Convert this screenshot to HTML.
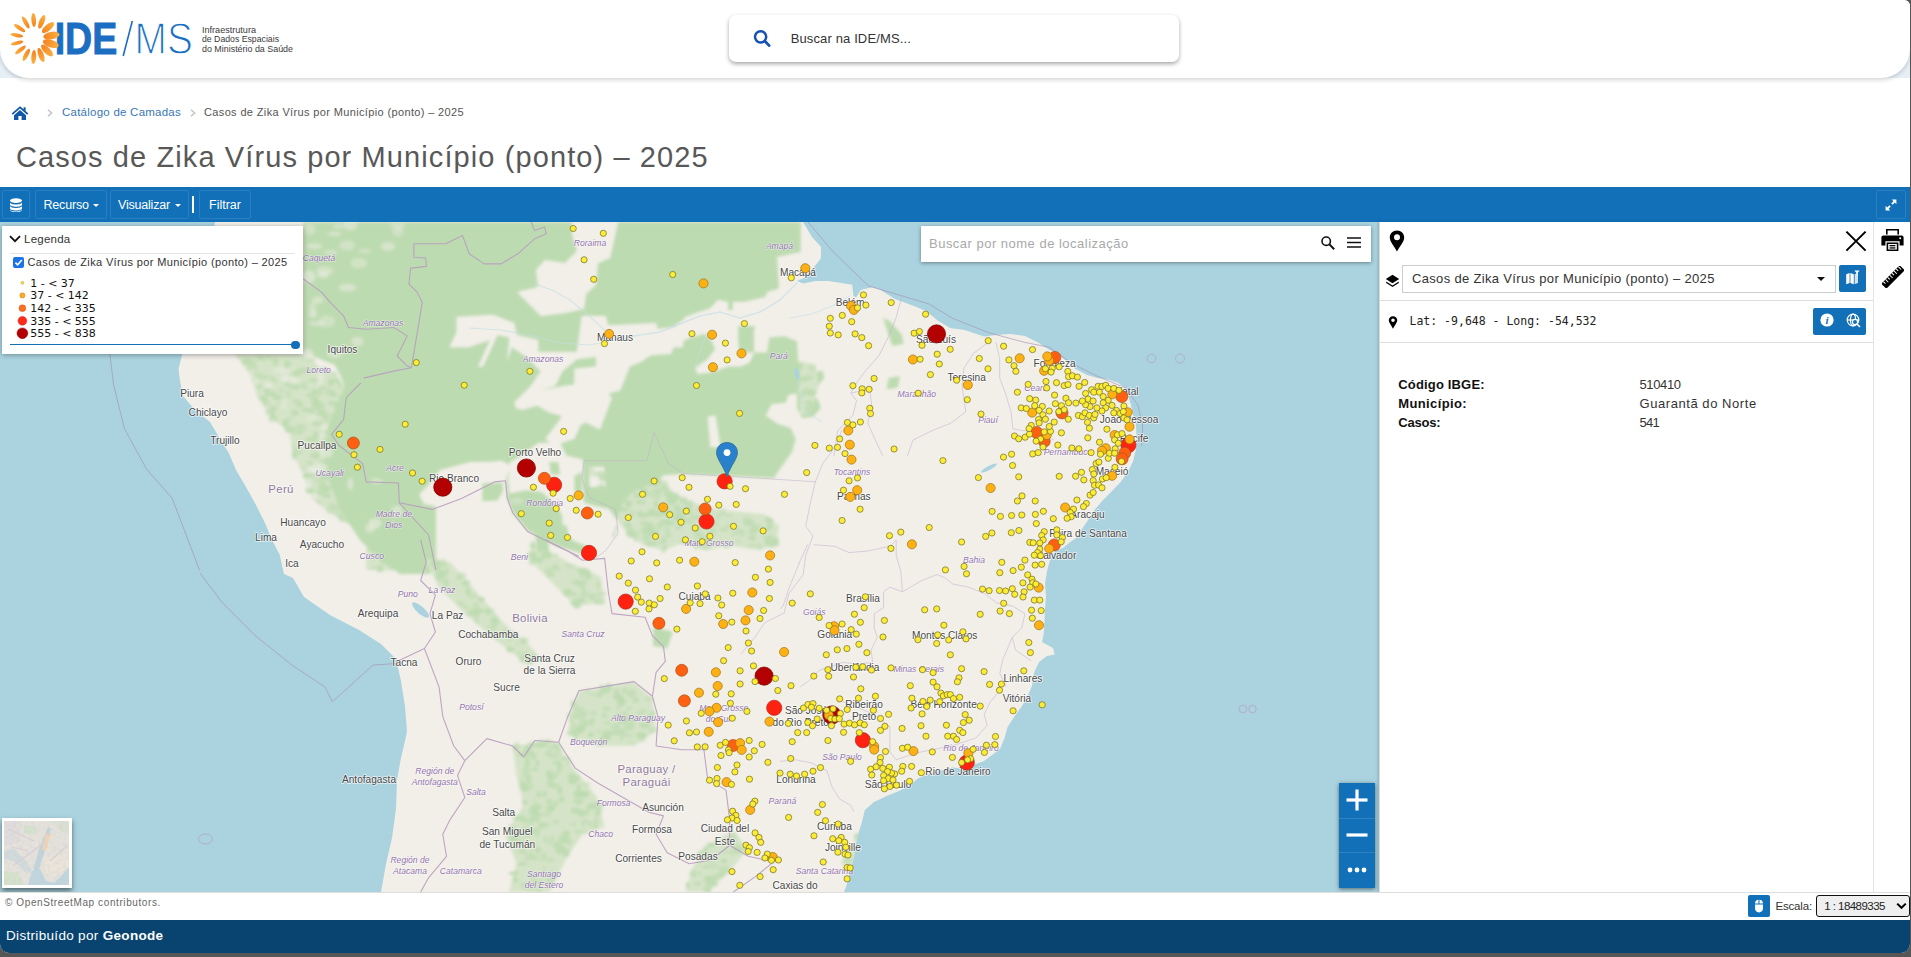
<!DOCTYPE html>
<html lang="pt-br">
<head>
<meta charset="utf-8">
<title>Casos de Zika Vírus por Município (ponto) – 2025</title>
<style>
*{box-sizing:border-box;margin:0;padding:0}
html,body{width:1911px;height:957px;overflow:hidden;background:#565656;font-family:"Liberation Sans",sans-serif;color:#333}
#app{position:absolute;left:0;top:0;width:1910px;height:953px;background:#fff;overflow:hidden;border-radius:0 6px 9px 9px}
.abs{position:absolute}
.t{position:absolute;white-space:nowrap;line-height:1}
/* header */
#hdrbg{position:absolute;left:0;top:46px;width:1910px;height:32px;background:linear-gradient(90deg,#e6eef6 0,#e6eef6 32px,#fff 32px,#fff 1878px,#e6eef6 1878px)}
#hdr{position:absolute;left:0;top:0;width:1910px;height:78px;background:#fff;border-radius:0 0 29px 29px;box-shadow:0 2px 4px rgba(0,0,0,.16)}
#below{position:absolute;left:0;top:78px;width:1910px;height:109px;background:#fff}
#search{position:absolute;left:729px;top:15px;width:450px;height:47px;background:#fff;border-radius:7px;box-shadow:0 2px 4px rgba(0,0,0,.35)}
/* toolbar */
#tb{position:absolute;left:0;top:187px;width:1910px;height:35px;background:#1170b8}
.tbb{position:absolute;top:3px;height:29px;border:1px solid #2a7fc0;border-radius:2px;color:#fff;font-size:12px}
/* map */
#map{position:absolute;left:0;top:222px;width:1379px;height:670px;background:#aad3df;overflow:hidden}
#panel{position:absolute;left:1379px;top:222px;width:494px;height:670px;background:#fff;border-left:1px solid #ddd;box-shadow:-1px 0 3px rgba(0,0,0,.18)}
#rtools{position:absolute;left:1873px;top:222px;width:36px;height:670px;background:#fff;border-left:1px solid #e4e4e4}
#bbar{position:absolute;left:0;top:892px;width:1910px;height:28px;background:#fff;border-top:1px solid #ddd}
#foot{position:absolute;left:0;top:920px;width:1910px;height:33px;background:#08446f}
</style>
</head>
<body>
<div id="app">
<div id="hdrbg"></div>
<div id="below"></div>
<div id="hdr"></div>
<!-- logo -->
<svg class="abs" style="left:0;top:0" width="320" height="78" viewBox="0 0 320 78">
  <text x="54.7" y="53.7" font-family="Liberation Sans, sans-serif" font-weight="bold" font-size="44.5" fill="#1b6ec2" stroke="#1b6ec2" stroke-width=".9" textLength="62.6" lengthAdjust="spacingAndGlyphs">IDE</text>
  <line x1="123.2" y1="56" x2="132.3" y2="21" stroke="#1b6ec2" stroke-width="1.6"/>
  <text x="134.6" y="53.7" font-family="Liberation Sans, sans-serif" font-size="44.5" fill="#1b6ec2" stroke="#fff" stroke-width="1.3" textLength="58.2" lengthAdjust="spacingAndGlyphs">MS</text>
  <g font-family="Liberation Sans, sans-serif" font-size="8.8" fill="#3a3a3a">
    <text x="202" y="33" textLength="54" lengthAdjust="spacingAndGlyphs">Infraestrutura</text>
    <text x="202" y="42.4" textLength="77" lengthAdjust="spacingAndGlyphs">de Dados Espaciais</text>
    <text x="202" y="51.8" textLength="91" lengthAdjust="spacingAndGlyphs">do Ministério da Saúde</text>
  </g>
  <g id="sun" transform="translate(35,38.5)">
    <defs><linearGradient id="pg" x1="0" y1="0" x2="0" y2="1"><stop offset="0" stop-color="#fbb040"/><stop offset="1" stop-color="#f58220"/></linearGradient></defs>
    <g fill="url(#pg)">
      <ellipse cx="0" cy="-18.5" rx="2.3" ry="7" transform="rotate(-4)"/>
      <ellipse cx="0" cy="-18" rx="2.6" ry="7.2" transform="rotate(22)"/>
      <ellipse cx="0" cy="-17" rx="3.1" ry="7.6" transform="rotate(50)"/>
      <ellipse cx="0" cy="-16.6" rx="3.8" ry="8.2" transform="rotate(80)"/>
      <ellipse cx="0" cy="-16.6" rx="3.8" ry="8.2" transform="rotate(108)"/>
      <ellipse cx="0" cy="-17" rx="3.2" ry="7.8" transform="rotate(135)"/>
      <ellipse cx="0" cy="-17.6" rx="2.7" ry="7.4" transform="rotate(160)"/>
      <ellipse cx="0" cy="-18.5" rx="2.4" ry="7" transform="rotate(184)"/>
      <ellipse cx="0" cy="-18.5" rx="2.2" ry="6.8" transform="rotate(208)"/>
      <ellipse cx="0" cy="-18.5" rx="2" ry="6.6" transform="rotate(232)"/>
      <ellipse cx="0" cy="-18.5" rx="1.9" ry="6.4" transform="rotate(256)"/>
      <ellipse cx="0" cy="-18.5" rx="1.9" ry="6.4" transform="rotate(280)"/>
      <ellipse cx="0" cy="-18.5" rx="2" ry="6.6" transform="rotate(304)"/>
      <ellipse cx="0" cy="-18.5" rx="2.1" ry="6.8" transform="rotate(330)"/>
    </g>
  </g>
</svg>
<!-- search -->
<div id="search"></div>
<svg class="abs" style="left:752px;top:28px" width="20" height="20" viewBox="0 0 20 20"><circle cx="8.6" cy="8.8" r="5.6" fill="none" stroke="#1351b4" stroke-width="2.5"/><line x1="12.8" y1="13" x2="17.2" y2="17.6" stroke="#1351b4" stroke-width="2.8" stroke-linecap="round"/></svg>
<div class="t" id="srchtxt" style="left:790.7px;top:31.5px;font-size:13px;color:#333;letter-spacing:.13px">Buscar na IDE/MS...</div>
<!-- breadcrumb -->
<svg class="abs" style="left:11px;top:105px" width="18" height="16" viewBox="0 0 18 16"><path d="M9 1.2 L0.6 8.4 L1.8 9.8 L9 3.6 L16.2 9.8 L17.4 8.4 L14.6 6 V2.2 H12.6 V4.3 Z" fill="#1258a8"/><path d="M9 5 L3 10.2 V15 H7.4 V11 H10.6 V15 H15 V10.2 Z" fill="#1258a8"/></svg>
<svg class="abs" style="left:47px;top:109px" width="6" height="8" viewBox="0 0 6 8"><path d="M1 0.8 L4.6 4 L1 7.2" fill="none" stroke="#c4c4c4" stroke-width="1.5"/></svg>
<div class="t" id="bc1" style="left:62px;top:107px;font-size:11.5px;color:#3a78b5;letter-spacing:.24px">Catálogo de Camadas</div>
<svg class="abs" style="left:189.5px;top:109px" width="6" height="8" viewBox="0 0 6 8"><path d="M1 0.8 L4.6 4 L1 7.2" fill="none" stroke="#c4c4c4" stroke-width="1.5"/></svg>
<div class="t" id="bc2" style="left:204px;top:106.5px;font-size:11px;color:#555;letter-spacing:.36px">Casos de Zika Vírus por Município (ponto) – 2025</div>
<!-- title -->
<div class="t" id="title" style="left:16px;top:143px;font-size:29px;color:#585858;letter-spacing:1.1px">Casos de Zika Vírus por Município (ponto) – 2025</div>
<!-- toolbar -->
<div id="tb">
  <div class="tbb" style="left:2px;width:28px"></div>
  <div class="tbb" style="left:35px;width:72px"></div>
  <div class="tbb" style="left:110px;width:79px"></div>
  <div class="abs" style="left:192px;top:9px;width:1.5px;height:17px;background:#fff"></div>
  <div class="tbb" style="left:199px;width:52px"></div>
  <div class="tbb" style="left:1876px;width:30px"></div>
  <svg class="abs" style="left:9px;top:11px" width="14" height="14" viewBox="0 0 14 14"><g fill="#fff"><ellipse cx="7" cy="2.6" rx="6" ry="2.4"/><path d="M1 4.2 C1 7.2 13 7.2 13 4.2 V6.6 C13 9.6 1 9.6 1 6.6 Z"/><path d="M1 7.8 C1 10.8 13 10.8 13 7.8 V10.2 C13 13.2 1 13.2 1 10.2 Z"/><path d="M1 11.3 C1 14.2 13 14.2 13 11.3 V12 C13 14.8 1 14.8 1 12 Z"/></g></svg>
  <div class="t" id="tb1" style="left:43.5px;top:11.5px;font-size:12.5px;color:#fff;letter-spacing:-.19px">Recurso</div>
  <div class="abs" style="left:93px;top:17px;border-left:3px solid transparent;border-right:3px solid transparent;border-top:3.5px solid #fff"></div>
  <div class="t" id="tb2" style="left:118px;top:11.5px;font-size:12.5px;color:#fff;letter-spacing:-.2px">Visualizar</div>
  <div class="abs" style="left:175px;top:17px;border-left:3px solid transparent;border-right:3px solid transparent;border-top:3.5px solid #fff"></div>
  <div class="t" id="tb3" style="left:209px;top:11.5px;font-size:12.5px;color:#fff">Filtrar</div>
  <svg class="abs" style="left:1885px;top:12px" width="12" height="12" viewBox="0 0 12 12"><g fill="#fff"><path d="M6.8 0.6 H11.4 V5.2 L9.8 3.6 L7.6 5.8 L6.2 4.4 L8.4 2.2 Z"/><path d="M5.2 11.4 H0.6 V6.8 L2.2 8.4 L4.4 6.2 L5.8 7.6 L3.6 9.8 Z"/></g></svg>
</div>
<div id="map">
<svg class="abs" style="left:0;top:0" width="1379" height="670" viewBox="0 0 1379 670">
<polygon points="215.0,0.0 212.0,18.0 198.0,78.0 186.0,118.0 182.0,133.0 178.5,147.0 180.0,159.0 183.0,174.0 195.0,188.0 210.0,200.0 219.0,215.0 229.0,231.5 236.0,248.0 246.0,265.0 255.5,282.0 265.0,301.0 272.0,318.0 279.6,332.6 284.0,352.0 293.0,356.0 304.0,375.0 330.0,393.0 359.0,408.0 381.0,422.0 396.0,437.0 401.0,459.0 405.0,484.0 407.0,510.0 401.0,536.0 397.0,558.0 396.0,587.0 392.0,616.0 386.0,642.0 381.0,670.0 844.0,670.0 846.7,663.0 849.0,653.0 852.0,642.0 854.5,632.0 856.0,621.0 858.5,611.0 862.0,600.0 864.8,588.0 874.0,580.0 886.7,574.0 899.0,569.0 910.0,563.0 918.0,556.6 929.0,552.0 940.0,548.8 952.7,545.6 965.0,547.0 974.7,542.5 984.0,539.0 990.0,534.6 1000.0,527.0 1004.5,516.0 1007.6,505.0 1014.0,495.0 1022.0,484.0 1028.0,473.0 1032.0,464.0 1034.0,451.0 1039.0,440.0 1047.0,434.0 1054.7,432.6 1053.0,426.0 1042.0,420.0 1043.7,412.0 1044.5,399.6 1045.0,387.0 1046.0,374.5 1045.0,362.0 1047.0,349.0 1050.0,338.0 1055.0,329.0 1063.0,326.0 1069.0,321.0 1076.0,316.0 1082.0,307.0 1088.0,298.0 1094.5,288.0 1103.0,278.0 1113.0,268.0 1121.0,259.5 1128.0,249.4 1133.0,239.4 1136.0,227.0 1136.5,213.5 1136.0,203.0 1133.0,193.0 1131.0,183.0 1128.0,173.0 1124.5,165.8 1118.0,160.7 1108.0,157.6 1098.0,156.0 1087.0,153.0 1075.5,147.0 1068.0,140.6 1059.0,133.0 1048.0,127.0 1038.0,120.5 1025.0,114.0 1010.0,112.0 996.0,113.0 984.0,114.4 964.6,108.0 950.0,106.0 938.0,98.7 926.0,89.0 914.0,84.0 895.0,77.0 880.0,67.8 872.3,65.3 861.0,67.8 856.0,75.4 853.5,74.0 852.2,62.8 828.4,59.0 815.8,59.0 803.3,61.5 797.0,59.0 805.8,55.3 815.8,42.7 820.8,36.4 821.0,25.0 812.0,15.0 803.0,0.0" fill="#f2efe9"/>
<defs><filter id="sb" x="-5%" y="-5%" width="110%" height="110%"><feGaussianBlur stdDeviation="1.6"/></filter><clipPath id="lc"><polygon points="215.0,0.0 212.0,18.0 198.0,78.0 186.0,118.0 182.0,133.0 178.5,147.0 180.0,159.0 183.0,174.0 195.0,188.0 210.0,200.0 219.0,215.0 229.0,231.5 236.0,248.0 246.0,265.0 255.5,282.0 265.0,301.0 272.0,318.0 279.6,332.6 284.0,352.0 293.0,356.0 304.0,375.0 330.0,393.0 359.0,408.0 381.0,422.0 396.0,437.0 401.0,459.0 405.0,484.0 407.0,510.0 401.0,536.0 397.0,558.0 396.0,587.0 392.0,616.0 386.0,642.0 381.0,670.0 844.0,670.0 846.7,663.0 849.0,653.0 852.0,642.0 854.5,632.0 856.0,621.0 858.5,611.0 862.0,600.0 864.8,588.0 874.0,580.0 886.7,574.0 899.0,569.0 910.0,563.0 918.0,556.6 929.0,552.0 940.0,548.8 952.7,545.6 965.0,547.0 974.7,542.5 984.0,539.0 990.0,534.6 1000.0,527.0 1004.5,516.0 1007.6,505.0 1014.0,495.0 1022.0,484.0 1028.0,473.0 1032.0,464.0 1034.0,451.0 1039.0,440.0 1047.0,434.0 1054.7,432.6 1053.0,426.0 1042.0,420.0 1043.7,412.0 1044.5,399.6 1045.0,387.0 1046.0,374.5 1045.0,362.0 1047.0,349.0 1050.0,338.0 1055.0,329.0 1063.0,326.0 1069.0,321.0 1076.0,316.0 1082.0,307.0 1088.0,298.0 1094.5,288.0 1103.0,278.0 1113.0,268.0 1121.0,259.5 1128.0,249.4 1133.0,239.4 1136.0,227.0 1136.5,213.5 1136.0,203.0 1133.0,193.0 1131.0,183.0 1128.0,173.0 1124.5,165.8 1118.0,160.7 1108.0,157.6 1098.0,156.0 1087.0,153.0 1075.5,147.0 1068.0,140.6 1059.0,133.0 1048.0,127.0 1038.0,120.5 1025.0,114.0 1010.0,112.0 996.0,113.0 984.0,114.4 964.6,108.0 950.0,106.0 938.0,98.7 926.0,89.0 914.0,84.0 895.0,77.0 880.0,67.8 872.3,65.3 861.0,67.8 856.0,75.4 853.5,74.0 852.2,62.8 828.4,59.0 815.8,59.0 803.3,61.5 797.0,59.0 805.8,55.3 815.8,42.7 820.8,36.4 821.0,25.0 812.0,15.0 803.0,0.0"/></clipPath></defs>
<g clip-path="url(#lc)"><g filter="url(#sb)">
<polygon points="234.4,132.1 307.7,132.1 318.7,144.5 337.0,151.8 344.3,170.2 340.7,192.1 329.7,210.5 337.0,232.4 351.6,250.7 366.3,261.7 366.3,348.2 402.9,348.2 384.6,331.3 366.3,316.7 348.0,302.0 329.7,291.0 311.4,276.4 304.0,254.4 293.0,232.4 289.4,210.5 271.1,195.8 256.4,173.8 249.1,151.8" fill="#d5e4c8"/>
<polygon points="303.0,0.0 800.7,0.0 800.7,30.0 777.0,35.0 779.0,66.6 767.0,70.0 765.6,75.0 760.0,93.0 754.0,108.0 754.0,130.6 767.0,130.6 769.4,115.5 784.4,114.3 797.0,119.3 798.2,139.4 805.8,144.4 802.0,155.7 798.2,170.8 788.2,173.3 785.7,180.8 771.9,182.0 765.6,193.4 778.0,202.0 790.7,206.0 795.7,217.0 792.0,230.0 777.0,251.0 774.4,256.0 683.0,252.0 650.0,254.0 625.0,256.0 620.0,268.0 613.0,280.0 615.5,314.0 600.0,318.0 590.0,334.0 557.0,324.0 528.0,309.0 513.0,291.0 507.0,276.0 505.0,240.0 470.0,240.0 440.0,248.0 425.0,268.0 436.0,286.0 436.0,338.0 430.0,352.0 400.0,352.0 380.0,338.0 360.0,318.0 340.0,288.0 325.0,248.0 322.0,218.0 335.0,188.0 345.0,163.0 335.0,143.0 303.0,130.0" fill="#bddbb0"/>
<polygon points="618.0,241.7 649.3,241.7 658.9,253.7 673.3,270.6 692.6,280.2 716.7,287.4 740.7,289.8 764.8,292.3 779.2,304.3 776.8,321.1 760.0,328.4 728.7,323.6 704.6,328.4 683.0,321.1 663.7,328.4 644.4,323.6 630.0,313.9 618.0,299.5 613.1,280.2 601.1,268.2 591.5,256.1 586.7,241.7" fill="#d5e4c8"/>
<polygon points="797.0,173.3 809.5,170.8 818.3,178.3 820.8,185.9 813.3,194.7 802.0,195.9 797.0,185.9" fill="#bddbb0"/>
<polygon points="812.1,152.0 822.1,148.2 824.6,155.7 818.3,163.3 812.1,160.7" fill="#bddbb0"/>
<polygon points="424.4,336.4 450.1,340.1 479.6,373.2 505.3,402.6 531.1,424.7 542.1,439.4 523.7,439.4 494.3,417.3 464.8,391.6 439.1,365.8" fill="#d5e4c8"/>
<polygon points="531.1,318.0 567.8,340.1 600.9,354.8 604.6,380.5 575.2,384.2 553.1,362.1 531.1,340.1" fill="#d5e4c8"/>
<polygon points="653.2,404.4 672.7,410.0 667.2,426.5 653.2,423.9" fill="#bddbb0"/>
<polygon points="578.9,468.8 634.0,459.6 652.4,476.2 656.1,509.3 634.0,524.0 597.3,524.0 567.8,513.0 571.5,487.2" fill="#d5e4c8"/>
<polygon points="512.7,524.0 553.1,518.5 567.8,538.7 597.3,575.5 604.6,604.9 582.5,612.3 567.8,634.3 549.4,670.0 509.0,670.0 516.3,641.7 505.3,612.3 523.7,582.8 516.3,553.4" fill="#d5e4c8"/>
<polygon points="707.6,623.3 733.4,608.6 748.1,627.0 729.7,649.1 707.6,670.0 685.5,670.0 692.9,645.4" fill="#d5e4c8"/>
<polygon points="876.8,586.5 898.9,571.8 909.9,575.5 862.1,623.3 851.1,645.4 840.0,641.7 858.4,612.3" fill="#d5e4c8"/>
<polygon points="882.9,95.7 890.4,99.4 901.7,112.6 903.6,122.1 892.3,123.9 888.5,112.6" fill="#bddbb0"/>
<polygon points="888.5,156.0 899.8,154.1 898.0,165.4 886.7,167.3" fill="#bddbb0"/>
<polygon points="800.0,139.0 815.1,142.8 818.8,163.5 811.3,189.9 800.0,193.6" fill="#d5e4c8"/>
<polygon points="584.5,239.2 649.6,239.2 651.2,227.4 666.9,238.4 700.0,249.4 682.6,251.8 666.9,250.2 657.5,258.8 644.9,265.1 632.3,269.8 622.9,280.8 618.2,293.4 617.4,305.9 610.4,318.5 604.1,312.2 608.8,296.5 604.1,287.1 584.5,283.9" fill="#bddbb0"/>
<polygon points="572.0,0.0 618.0,0.0 615.0,14.0 610.0,36.0 598.0,41.0 596.0,63.0 586.0,72.0 584.0,87.0 565.0,91.0 541.0,94.0 531.0,84.0 517.0,70.0 538.0,65.0 536.0,48.0 545.0,38.0 565.0,41.0 577.0,29.0 572.0,12.0" fill="#f2efe9"/>
<polygon points="456.5,95.1 492.6,92.7 514.3,101.1 516.7,113.1 538.3,118.0 538.3,130.0 576.8,130.0 579.2,113.1 581.7,93.9 605.7,93.9 608.1,103.5 656.3,101.1 658.7,115.6 685.2,96.3 682.8,125.2 661.1,125.2 641.8,139.6 629.8,144.4 620.2,168.5 600.9,173.3 598.5,192.6 584.1,195.0 574.4,216.7 552.8,224.1 545.5,216.7 560.0,197.4 564.8,185.4 574.4,178.1 574.4,146.8 596.1,144.4 596.1,134.8 576.8,137.2 562.4,149.3 555.2,163.7 540.7,168.5 516.7,187.8 514.3,180.5 531.1,163.7 540.7,149.3 526.3,134.8 511.8,125.2 507.0,139.6 509.4,115.6 497.4,113.1 483.0,144.4 478.1,144.4 490.2,118.0 468.5,125.2 449.3,125.2 456.5,110.7" fill="#f2efe9"/>
<polygon points="608.0,103.5 640.0,104.0 655.0,103.0 656.0,107.0 684.0,104.0 685.0,95.0 699.0,90.0 710.0,86.6 718.0,78.0 728.0,80.0 728.0,88.0 733.0,88.0 733.0,80.0 744.0,80.0 765.6,75.0 775.0,78.0 775.0,108.0 754.0,104.0 738.0,104.0 738.0,115.5 710.0,117.0 705.0,111.8 690.0,115.5 674.0,124.0 671.0,132.0 652.6,133.0 640.0,137.0 625.0,130.0 608.0,128.0" fill="#f2efe9"/>
<polygon points="710.3,116.8 738.0,115.5 738.0,108.0 710.3,108.0 707.8,108.0" fill="#f2efe9"/>
<polygon points="710.3,116.8 738.0,115.5 739.2,130.6 754.3,130.6 749.3,140.7 740.5,144.4 727.9,144.4 717.9,148.2 707.8,150.7 697.8,152.0 695.3,145.7 707.8,136.9 715.4,126.8" fill="#f2efe9"/>
<polygon points="707.8,194.7 715.4,193.4 720.4,225.0 710.3,225.0" fill="#f2efe9"/>
<polygon points="419.2,272.4 428.9,262.8 443.3,253.2 460.2,246.0 481.8,241.1 501.1,238.7 510.7,243.6 505.9,258.0 496.3,262.8 477.0,272.4 460.2,282.1 438.5,284.5 424.1,282.1" fill="#f2efe9"/>
<polygon points="517.9,178.6 537.2,168.9 563.7,164.1 600.0,159.3 611.8,176.1 600.0,207.4 585.4,200.2 573.3,207.4 568.5,195.4 549.2,190.6 537.2,183.4 520.4,188.2" fill="#f2efe9"/>
<polygon points="509.9,240.0 519.3,235.3 538.1,221.1 560.1,221.1 566.4,233.7 582.9,237.6 583.7,280.8 594.7,283.9 608.8,287.1 618.2,299.6 610.4,318.5 600.9,334.2 588.4,324.8 572.7,318.5 563.3,305.9 561.7,291.8 550.7,277.7 541.3,269.8 525.6,268.2 509.9,271.4 508.3,258.8" fill="#f2efe9"/>
<polygon points="588.4,245.5 604.1,244.7 605.7,265.1 590.0,265.1" fill="#f2efe9"/>
<g fill="#bddbb0"><ellipse cx="310.7" cy="253.0" rx="5.2" ry="2.7" opacity="0.70"/><ellipse cx="333.4" cy="172.0" rx="3.7" ry="3.1" opacity="0.85"/><ellipse cx="344.6" cy="265.1" rx="2.4" ry="1.5" opacity="0.71"/><ellipse cx="275.2" cy="138.6" rx="3.5" ry="2.6" opacity="0.87"/><ellipse cx="321.9" cy="270.4" rx="3.6" ry="3.2" opacity="0.68"/><ellipse cx="273.1" cy="194.5" rx="2.1" ry="3.4" opacity="0.65"/><ellipse cx="251.5" cy="145.0" rx="4.7" ry="1.9" opacity="0.73"/><ellipse cx="309.8" cy="173.3" rx="4.5" ry="1.8" opacity="0.77"/><ellipse cx="270.3" cy="190.4" rx="5.4" ry="3.5" opacity="0.60"/><ellipse cx="289.9" cy="196.1" rx="2.1" ry="1.7" opacity="0.74"/><ellipse cx="297.1" cy="230.0" rx="5.3" ry="2.7" opacity="0.74"/><ellipse cx="251.9" cy="140.4" rx="5.4" ry="2.1" opacity="0.80"/><ellipse cx="334.9" cy="195.5" rx="2.4" ry="3.3" opacity="0.48"/><ellipse cx="268.8" cy="135.6" rx="2.8" ry="2.6" opacity="0.48"/><ellipse cx="330.8" cy="160.5" rx="3.1" ry="3.7" opacity="0.94"/><ellipse cx="345.1" cy="281.5" rx="4.0" ry="1.9" opacity="0.47"/><ellipse cx="358.6" cy="284.1" rx="4.7" ry="3.8" opacity="0.63"/><ellipse cx="367.6" cy="318.7" rx="3.9" ry="3.1" opacity="0.64"/><ellipse cx="332.6" cy="263.7" rx="2.1" ry="3.1" opacity="0.95"/><ellipse cx="332.3" cy="227.3" rx="4.9" ry="1.7" opacity="0.83"/><ellipse cx="315.5" cy="181.8" rx="4.4" ry="2.7" opacity="0.76"/><ellipse cx="287.8" cy="161.5" rx="3.6" ry="3.6" opacity="0.87"/><ellipse cx="281.1" cy="168.6" rx="3.5" ry="2.2" opacity="0.56"/><ellipse cx="317.6" cy="200.2" rx="4.9" ry="4.0" opacity="0.68"/><ellipse cx="247.0" cy="138.9" rx="5.0" ry="1.6" opacity="0.80"/><ellipse cx="330.6" cy="198.9" rx="4.7" ry="1.5" opacity="0.52"/><ellipse cx="311.1" cy="137.4" rx="4.9" ry="2.1" opacity="0.52"/><ellipse cx="309.7" cy="268.2" rx="4.2" ry="3.5" opacity="0.93"/><ellipse cx="314.5" cy="170.7" rx="1.8" ry="2.7" opacity="0.81"/><ellipse cx="322.1" cy="264.9" rx="4.6" ry="2.5" opacity="0.85"/><ellipse cx="342.5" cy="287.2" rx="2.6" ry="3.7" opacity="0.94"/><ellipse cx="293.2" cy="150.0" rx="3.4" ry="2.9" opacity="0.83"/><ellipse cx="258.1" cy="164.2" rx="3.7" ry="3.3" opacity="0.87"/><ellipse cx="323.2" cy="194.8" rx="4.5" ry="3.1" opacity="0.71"/><ellipse cx="376.9" cy="326.7" rx="2.6" ry="3.6" opacity="0.93"/><ellipse cx="322.8" cy="255.9" rx="2.5" ry="2.8" opacity="0.70"/><ellipse cx="329.3" cy="238.2" rx="4.4" ry="1.7" opacity="0.72"/><ellipse cx="314.2" cy="159.5" rx="3.4" ry="3.5" opacity="0.90"/><ellipse cx="314.7" cy="200.6" rx="2.5" ry="3.0" opacity="0.91"/><ellipse cx="288.7" cy="208.9" rx="4.1" ry="1.8" opacity="0.82"/><ellipse cx="276.7" cy="174.8" rx="3.8" ry="2.6" opacity="0.64"/><ellipse cx="304.1" cy="246.5" rx="2.4" ry="2.0" opacity="0.77"/><ellipse cx="342.0" cy="246.5" rx="4.9" ry="3.0" opacity="0.88"/><ellipse cx="371.0" cy="327.2" rx="3.0" ry="2.3" opacity="0.91"/><ellipse cx="278.2" cy="153.0" rx="4.9" ry="2.6" opacity="0.84"/><ellipse cx="388.0" cy="341.3" rx="2.2" ry="2.8" opacity="0.83"/><ellipse cx="319.2" cy="280.3" rx="2.5" ry="1.7" opacity="0.50"/><ellipse cx="321.2" cy="255.0" rx="2.3" ry="2.0" opacity="0.55"/><ellipse cx="376.0" cy="346.1" rx="5.2" ry="1.7" opacity="0.48"/><ellipse cx="313.1" cy="243.4" rx="3.4" ry="3.0" opacity="0.46"/><ellipse cx="267.3" cy="167.7" rx="3.7" ry="1.5" opacity="0.90"/><ellipse cx="365.5" cy="308.1" rx="3.3" ry="3.7" opacity="0.89"/><ellipse cx="351.5" cy="297.9" rx="4.6" ry="2.5" opacity="0.81"/><ellipse cx="339.6" cy="182.2" rx="5.3" ry="3.2" opacity="0.62"/><ellipse cx="345.6" cy="255.2" rx="3.8" ry="2.5" opacity="0.95"/><ellipse cx="342.7" cy="283.6" rx="4.6" ry="4.0" opacity="0.46"/><ellipse cx="338.1" cy="291.7" rx="2.7" ry="2.5" opacity="0.48"/><ellipse cx="313.9" cy="168.6" rx="3.6" ry="3.0" opacity="0.48"/><ellipse cx="323.2" cy="261.3" rx="3.2" ry="2.2" opacity="0.78"/><ellipse cx="328.9" cy="193.3" rx="4.5" ry="2.2" opacity="0.46"/><ellipse cx="275.7" cy="141.3" rx="2.4" ry="3.4" opacity="0.64"/><ellipse cx="311.2" cy="176.1" rx="2.0" ry="2.8" opacity="0.51"/><ellipse cx="311.2" cy="188.7" rx="4.0" ry="2.5" opacity="0.84"/><ellipse cx="274.6" cy="156.7" rx="5.1" ry="3.5" opacity="0.76"/><ellipse cx="295.0" cy="190.7" rx="4.3" ry="2.9" opacity="0.75"/><ellipse cx="341.1" cy="294.9" rx="2.5" ry="2.1" opacity="0.94"/><ellipse cx="325.7" cy="147.7" rx="2.1" ry="3.2" opacity="0.73"/><ellipse cx="315.1" cy="177.6" rx="3.1" ry="3.4" opacity="0.87"/><ellipse cx="305.9" cy="187.8" rx="4.8" ry="2.4" opacity="0.78"/><ellipse cx="296.7" cy="153.0" rx="5.0" ry="1.7" opacity="0.49"/><ellipse cx="329.5" cy="236.9" rx="4.3" ry="2.2" opacity="0.84"/><ellipse cx="285.8" cy="200.7" rx="3.3" ry="3.8" opacity="0.90"/><ellipse cx="296.0" cy="210.6" rx="3.3" ry="2.5" opacity="0.55"/><ellipse cx="329.3" cy="170.2" rx="4.6" ry="3.7" opacity="0.59"/><ellipse cx="326.1" cy="254.7" rx="5.4" ry="3.1" opacity="0.85"/><ellipse cx="341.3" cy="163.2" rx="4.6" ry="3.1" opacity="0.57"/><ellipse cx="300.9" cy="205.1" rx="5.4" ry="3.2" opacity="0.70"/><ellipse cx="384.2" cy="339.1" rx="4.2" ry="2.8" opacity="0.81"/><ellipse cx="305.3" cy="163.7" rx="4.5" ry="4.0" opacity="0.64"/><ellipse cx="262.7" cy="176.2" rx="3.4" ry="2.2" opacity="0.93"/><ellipse cx="265.5" cy="179.0" rx="2.7" ry="3.3" opacity="0.75"/><ellipse cx="272.2" cy="172.0" rx="2.8" ry="1.9" opacity="0.83"/><ellipse cx="315.8" cy="179.8" rx="2.0" ry="3.9" opacity="0.85"/><ellipse cx="321.3" cy="191.4" rx="5.5" ry="3.1" opacity="0.57"/><ellipse cx="354.6" cy="263.0" rx="2.4" ry="1.9" opacity="0.61"/><ellipse cx="321.4" cy="269.7" rx="5.5" ry="2.2" opacity="0.72"/><ellipse cx="315.3" cy="233.4" rx="5.3" ry="3.0" opacity="0.88"/><ellipse cx="323.0" cy="166.1" rx="4.9" ry="2.3" opacity="0.61"/><ellipse cx="329.5" cy="231.1" rx="1.8" ry="4.0" opacity="0.85"/><ellipse cx="325.4" cy="196.5" rx="3.0" ry="2.5" opacity="0.78"/><ellipse cx="277.6" cy="175.3" rx="4.5" ry="2.3" opacity="0.92"/><ellipse cx="329.3" cy="288.5" rx="3.0" ry="3.6" opacity="0.50"/><ellipse cx="258.2" cy="152.5" rx="4.3" ry="3.3" opacity="0.54"/><ellipse cx="334.3" cy="151.5" rx="2.6" ry="1.9" opacity="0.51"/><ellipse cx="303.0" cy="147.8" rx="5.2" ry="2.6" opacity="0.71"/><ellipse cx="343.5" cy="297.8" rx="4.8" ry="2.5" opacity="0.62"/><ellipse cx="303.9" cy="135.4" rx="3.3" ry="3.2" opacity="0.94"/><ellipse cx="290.2" cy="206.0" rx="4.2" ry="1.8" opacity="0.64"/><ellipse cx="340.1" cy="174.8" rx="2.1" ry="2.1" opacity="0.74"/><ellipse cx="312.5" cy="158.9" rx="5.4" ry="1.8" opacity="0.90"/><ellipse cx="326.0" cy="253.2" rx="3.9" ry="2.2" opacity="0.90"/><ellipse cx="335.8" cy="158.6" rx="4.9" ry="2.2" opacity="0.90"/><ellipse cx="326.7" cy="148.5" rx="1.9" ry="2.0" opacity="0.94"/><ellipse cx="313.3" cy="163.0" rx="3.2" ry="2.9" opacity="0.54"/><ellipse cx="322.0" cy="189.0" rx="3.9" ry="2.3" opacity="0.77"/><ellipse cx="335.5" cy="233.6" rx="3.3" ry="3.1" opacity="0.79"/><ellipse cx="362.2" cy="294.5" rx="3.6" ry="4.0" opacity="0.87"/><ellipse cx="307.6" cy="254.4" rx="5.1" ry="2.8" opacity="0.71"/><ellipse cx="288.5" cy="143.9" rx="4.5" ry="3.8" opacity="0.82"/><ellipse cx="309.7" cy="240.7" rx="3.3" ry="1.6" opacity="0.80"/><ellipse cx="323.1" cy="183.7" rx="2.9" ry="2.5" opacity="0.57"/><ellipse cx="284.9" cy="202.3" rx="2.0" ry="3.7" opacity="0.86"/><ellipse cx="301.4" cy="209.1" rx="4.0" ry="1.6" opacity="0.47"/><ellipse cx="294.1" cy="234.2" rx="2.4" ry="3.7" opacity="0.95"/><ellipse cx="309.4" cy="149.1" rx="2.6" ry="2.3" opacity="0.81"/><ellipse cx="267.5" cy="171.2" rx="2.7" ry="3.2" opacity="0.85"/><ellipse cx="273.0" cy="197.1" rx="5.2" ry="3.2" opacity="0.59"/><ellipse cx="323.4" cy="246.8" rx="2.0" ry="3.0" opacity="0.59"/><ellipse cx="318.7" cy="170.9" rx="3.9" ry="3.1" opacity="0.63"/><ellipse cx="321.5" cy="241.3" rx="4.9" ry="3.2" opacity="0.71"/><ellipse cx="336.9" cy="182.9" rx="3.4" ry="3.4" opacity="0.84"/><ellipse cx="316.8" cy="179.9" rx="3.9" ry="2.7" opacity="0.47"/><ellipse cx="335.0" cy="286.5" rx="3.9" ry="3.7" opacity="0.54"/><ellipse cx="260.0" cy="135.9" rx="3.6" ry="2.6" opacity="0.67"/><ellipse cx="330.3" cy="249.5" rx="4.7" ry="2.1" opacity="0.52"/><ellipse cx="286.8" cy="141.2" rx="3.0" ry="3.1" opacity="0.71"/><ellipse cx="295.8" cy="178.8" rx="5.4" ry="1.6" opacity="0.69"/><ellipse cx="247.3" cy="139.5" rx="5.5" ry="3.4" opacity="0.82"/><ellipse cx="273.2" cy="186.8" rx="3.8" ry="2.1" opacity="0.68"/><ellipse cx="312.4" cy="217.0" rx="4.9" ry="2.5" opacity="0.84"/><ellipse cx="262.0" cy="176.1" rx="2.6" ry="2.7" opacity="0.60"/><ellipse cx="295.6" cy="191.4" rx="1.9" ry="2.0" opacity="0.58"/><ellipse cx="295.3" cy="165.2" rx="5.3" ry="2.4" opacity="0.83"/><ellipse cx="299.2" cy="150.0" rx="5.1" ry="2.3" opacity="0.84"/><ellipse cx="300.8" cy="183.6" rx="2.0" ry="1.9" opacity="0.75"/><ellipse cx="305.9" cy="249.6" rx="2.3" ry="3.3" opacity="0.58"/><ellipse cx="356.7" cy="276.0" rx="2.3" ry="2.0" opacity="0.59"/><ellipse cx="272.5" cy="195.2" rx="3.1" ry="2.0" opacity="0.47"/><ellipse cx="306.5" cy="216.9" rx="2.0" ry="2.5" opacity="0.61"/><ellipse cx="318.2" cy="192.5" rx="2.4" ry="2.5" opacity="0.69"/><ellipse cx="274.8" cy="152.2" rx="3.1" ry="2.6" opacity="0.53"/><ellipse cx="332.6" cy="283.6" rx="3.8" ry="3.3" opacity="0.46"/><ellipse cx="300.4" cy="210.8" rx="2.0" ry="2.5" opacity="0.48"/><ellipse cx="317.9" cy="258.7" rx="3.5" ry="2.3" opacity="0.58"/><ellipse cx="340.1" cy="266.2" rx="3.3" ry="2.5" opacity="0.59"/><ellipse cx="319.9" cy="198.8" rx="3.1" ry="3.9" opacity="0.52"/><ellipse cx="266.9" cy="181.4" rx="4.3" ry="2.1" opacity="0.45"/><ellipse cx="326.1" cy="217.2" rx="2.7" ry="2.7" opacity="0.78"/><ellipse cx="326.8" cy="267.0" rx="3.9" ry="3.6" opacity="0.93"/><ellipse cx="290.6" cy="207.0" rx="5.1" ry="2.3" opacity="0.81"/><ellipse cx="351.6" cy="280.4" rx="5.4" ry="3.6" opacity="0.53"/><ellipse cx="339.2" cy="238.1" rx="3.9" ry="2.4" opacity="0.59"/><ellipse cx="274.4" cy="185.9" rx="3.0" ry="1.9" opacity="0.71"/><ellipse cx="255.7" cy="145.7" rx="2.1" ry="1.8" opacity="0.80"/><ellipse cx="330.0" cy="223.0" rx="4.4" ry="3.1" opacity="0.87"/><ellipse cx="273.4" cy="172.0" rx="1.9" ry="3.0" opacity="0.92"/><ellipse cx="391.7" cy="345.8" rx="2.0" ry="3.3" opacity="0.51"/><ellipse cx="315.8" cy="212.8" rx="2.9" ry="3.5" opacity="0.87"/><ellipse cx="263.9" cy="155.2" rx="5.3" ry="2.1" opacity="0.69"/><ellipse cx="280.6" cy="181.2" rx="3.6" ry="2.4" opacity="0.58"/><ellipse cx="316.0" cy="221.7" rx="4.8" ry="2.5" opacity="0.48"/><ellipse cx="327.2" cy="274.0" rx="4.1" ry="2.2" opacity="0.92"/><ellipse cx="380.1" cy="346.9" rx="3.4" ry="3.6" opacity="0.81"/><ellipse cx="264.1" cy="137.9" rx="2.4" ry="1.8" opacity="0.49"/><ellipse cx="331.6" cy="181.2" rx="3.2" ry="2.4" opacity="0.78"/><ellipse cx="288.6" cy="152.4" rx="3.0" ry="3.4" opacity="0.56"/><ellipse cx="293.5" cy="225.2" rx="1.8" ry="2.8" opacity="0.65"/><ellipse cx="288.7" cy="171.7" rx="3.1" ry="4.0" opacity="0.52"/><ellipse cx="342.9" cy="177.9" rx="4.1" ry="3.7" opacity="0.88"/><ellipse cx="340.4" cy="241.2" rx="3.9" ry="1.8" opacity="0.87"/><ellipse cx="299.2" cy="181.8" rx="4.0" ry="2.9" opacity="0.71"/><ellipse cx="309.7" cy="260.3" rx="4.0" ry="3.8" opacity="0.53"/><ellipse cx="317.2" cy="182.7" rx="4.9" ry="3.1" opacity="0.92"/><ellipse cx="317.1" cy="184.3" rx="4.8" ry="3.6" opacity="0.84"/><ellipse cx="296.1" cy="153.8" rx="1.9" ry="2.4" opacity="0.88"/><ellipse cx="313.0" cy="160.0" rx="2.2" ry="3.9" opacity="0.76"/><ellipse cx="655.5" cy="258.7" rx="5.5" ry="3.2" opacity="0.82"/><ellipse cx="656.1" cy="268.6" rx="3.3" ry="1.9" opacity="0.77"/><ellipse cx="668.5" cy="312.8" rx="3.3" ry="2.6" opacity="0.70"/><ellipse cx="751.2" cy="300.3" rx="3.5" ry="3.8" opacity="0.64"/><ellipse cx="729.8" cy="293.8" rx="3.5" ry="1.7" opacity="0.66"/><ellipse cx="640.8" cy="279.9" rx="5.3" ry="2.2" opacity="0.80"/><ellipse cx="667.7" cy="271.3" rx="4.8" ry="3.6" opacity="0.75"/><ellipse cx="656.7" cy="274.2" rx="4.5" ry="3.2" opacity="0.62"/><ellipse cx="759.6" cy="324.0" rx="1.9" ry="3.1" opacity="0.68"/><ellipse cx="656.3" cy="282.0" rx="3.0" ry="3.2" opacity="0.75"/><ellipse cx="746.3" cy="298.0" rx="4.4" ry="4.0" opacity="0.48"/><ellipse cx="675.7" cy="276.5" rx="4.2" ry="2.0" opacity="0.94"/><ellipse cx="627.0" cy="273.8" rx="2.3" ry="2.5" opacity="0.82"/><ellipse cx="602.8" cy="256.2" rx="4.2" ry="3.1" opacity="0.82"/><ellipse cx="635.5" cy="312.0" rx="4.5" ry="3.4" opacity="0.51"/><ellipse cx="752.2" cy="323.6" rx="5.1" ry="1.6" opacity="0.63"/><ellipse cx="689.9" cy="288.0" rx="2.2" ry="3.5" opacity="0.60"/><ellipse cx="643.3" cy="309.1" rx="2.7" ry="2.5" opacity="0.48"/><ellipse cx="628.6" cy="280.8" rx="3.9" ry="2.6" opacity="0.88"/><ellipse cx="704.6" cy="316.6" rx="5.4" ry="2.5" opacity="0.46"/><ellipse cx="728.1" cy="303.5" rx="2.4" ry="2.8" opacity="0.46"/><ellipse cx="607.9" cy="267.8" rx="5.4" ry="3.1" opacity="0.87"/><ellipse cx="601.8" cy="264.3" rx="2.2" ry="3.8" opacity="0.61"/><ellipse cx="680.8" cy="298.4" rx="5.1" ry="3.9" opacity="0.73"/><ellipse cx="683.1" cy="320.0" rx="3.3" ry="2.2" opacity="0.82"/><ellipse cx="636.4" cy="273.6" rx="3.4" ry="2.7" opacity="0.63"/><ellipse cx="669.6" cy="280.8" rx="2.0" ry="3.6" opacity="0.48"/><ellipse cx="688.3" cy="289.2" rx="3.3" ry="2.1" opacity="0.50"/><ellipse cx="658.3" cy="269.0" rx="3.6" ry="2.1" opacity="0.82"/><ellipse cx="665.0" cy="325.4" rx="1.8" ry="3.0" opacity="0.93"/><ellipse cx="657.1" cy="293.5" rx="3.2" ry="2.3" opacity="0.75"/><ellipse cx="682.5" cy="286.4" rx="4.6" ry="1.6" opacity="0.50"/><ellipse cx="635.2" cy="265.1" rx="4.7" ry="2.6" opacity="0.88"/><ellipse cx="664.1" cy="266.5" rx="4.3" ry="1.7" opacity="0.94"/><ellipse cx="647.8" cy="312.7" rx="4.7" ry="3.1" opacity="0.48"/><ellipse cx="707.0" cy="289.5" rx="5.2" ry="3.1" opacity="0.46"/><ellipse cx="766.6" cy="306.9" rx="3.9" ry="1.5" opacity="0.82"/><ellipse cx="667.2" cy="300.6" rx="5.4" ry="3.8" opacity="0.49"/><ellipse cx="672.9" cy="279.6" rx="2.2" ry="2.3" opacity="0.82"/><ellipse cx="600.4" cy="251.7" rx="4.9" ry="3.2" opacity="0.72"/><ellipse cx="608.5" cy="252.0" rx="2.9" ry="3.9" opacity="0.73"/><ellipse cx="666.6" cy="288.2" rx="4.9" ry="1.8" opacity="0.89"/><ellipse cx="669.8" cy="274.4" rx="4.3" ry="3.8" opacity="0.70"/><ellipse cx="653.3" cy="255.9" rx="3.1" ry="3.0" opacity="0.71"/><ellipse cx="661.5" cy="291.5" rx="4.9" ry="2.4" opacity="0.74"/><ellipse cx="649.8" cy="302.1" rx="2.7" ry="2.2" opacity="0.82"/><ellipse cx="659.4" cy="303.8" rx="3.4" ry="3.0" opacity="0.73"/><ellipse cx="774.6" cy="320.5" rx="3.5" ry="2.7" opacity="0.57"/><ellipse cx="645.7" cy="315.1" rx="1.9" ry="3.2" opacity="0.73"/><ellipse cx="733.9" cy="311.5" rx="2.2" ry="3.5" opacity="0.56"/><ellipse cx="625.0" cy="288.1" rx="4.1" ry="1.8" opacity="0.83"/><ellipse cx="698.8" cy="319.6" rx="5.2" ry="3.2" opacity="0.63"/><ellipse cx="769.8" cy="304.0" rx="2.9" ry="3.6" opacity="0.81"/><ellipse cx="637.6" cy="263.3" rx="1.9" ry="2.8" opacity="0.58"/><ellipse cx="643.1" cy="263.6" rx="2.3" ry="2.7" opacity="0.59"/><ellipse cx="641.6" cy="265.8" rx="3.7" ry="3.7" opacity="0.53"/><ellipse cx="752.2" cy="315.8" rx="4.1" ry="2.9" opacity="0.82"/><ellipse cx="689.6" cy="298.9" rx="5.2" ry="3.4" opacity="0.58"/><ellipse cx="656.5" cy="309.9" rx="2.7" ry="2.6" opacity="0.64"/><ellipse cx="727.1" cy="323.5" rx="3.7" ry="2.9" opacity="0.62"/><ellipse cx="751.4" cy="309.7" rx="3.7" ry="1.7" opacity="0.71"/><ellipse cx="622.2" cy="287.3" rx="3.1" ry="2.7" opacity="0.55"/><ellipse cx="680.4" cy="290.0" rx="5.4" ry="2.9" opacity="0.52"/><ellipse cx="644.5" cy="270.8" rx="4.4" ry="3.8" opacity="0.94"/><ellipse cx="769.6" cy="321.9" rx="5.0" ry="3.8" opacity="0.46"/><ellipse cx="681.0" cy="292.9" rx="4.3" ry="3.0" opacity="0.76"/><ellipse cx="592.8" cy="251.4" rx="5.0" ry="3.9" opacity="0.46"/><ellipse cx="698.4" cy="307.3" rx="4.8" ry="1.5" opacity="0.48"/><ellipse cx="651.3" cy="271.8" rx="1.9" ry="3.4" opacity="0.58"/><ellipse cx="699.4" cy="287.3" rx="3.0" ry="3.2" opacity="0.68"/><ellipse cx="620.5" cy="254.7" rx="2.7" ry="2.7" opacity="0.84"/><ellipse cx="650.8" cy="262.4" rx="4.2" ry="2.2" opacity="0.71"/><ellipse cx="635.8" cy="317.7" rx="2.5" ry="2.1" opacity="0.60"/><ellipse cx="650.1" cy="304.7" rx="4.3" ry="3.5" opacity="0.72"/><ellipse cx="633.7" cy="260.6" rx="3.3" ry="4.0" opacity="0.64"/><ellipse cx="655.3" cy="320.7" rx="5.5" ry="2.5" opacity="0.52"/><ellipse cx="738.7" cy="309.5" rx="3.1" ry="3.5" opacity="0.64"/><ellipse cx="641.9" cy="293.1" rx="4.5" ry="2.7" opacity="0.86"/><ellipse cx="771.6" cy="322.4" rx="3.1" ry="3.8" opacity="0.52"/><ellipse cx="724.3" cy="323.7" rx="2.5" ry="1.8" opacity="0.79"/><ellipse cx="756.6" cy="304.7" rx="5.3" ry="2.6" opacity="0.64"/><ellipse cx="609.8" cy="265.4" rx="5.3" ry="1.7" opacity="0.54"/><ellipse cx="645.8" cy="257.5" rx="2.3" ry="2.8" opacity="0.72"/><ellipse cx="696.0" cy="307.8" rx="3.7" ry="3.9" opacity="0.49"/><ellipse cx="629.6" cy="248.3" rx="2.9" ry="3.4" opacity="0.91"/><ellipse cx="650.3" cy="291.0" rx="2.9" ry="3.5" opacity="0.94"/><ellipse cx="675.2" cy="294.0" rx="4.9" ry="2.7" opacity="0.55"/><ellipse cx="618.0" cy="256.7" rx="4.5" ry="2.0" opacity="0.46"/><ellipse cx="629.0" cy="311.0" rx="3.6" ry="3.1" opacity="0.68"/><ellipse cx="621.8" cy="243.0" rx="2.9" ry="1.6" opacity="0.58"/><ellipse cx="677.7" cy="295.8" rx="3.0" ry="2.4" opacity="0.89"/><ellipse cx="690.7" cy="281.6" rx="3.0" ry="3.8" opacity="0.57"/><ellipse cx="766.9" cy="315.6" rx="5.1" ry="1.9" opacity="0.70"/><ellipse cx="631.9" cy="292.3" rx="2.4" ry="3.9" opacity="0.59"/><ellipse cx="653.5" cy="290.2" rx="3.6" ry="3.8" opacity="0.71"/><ellipse cx="697.2" cy="296.5" rx="3.5" ry="1.7" opacity="0.70"/><ellipse cx="679.4" cy="297.3" rx="5.4" ry="2.2" opacity="0.67"/><ellipse cx="631.8" cy="313.6" rx="4.8" ry="2.1" opacity="0.90"/><ellipse cx="683.7" cy="278.6" rx="3.9" ry="3.9" opacity="0.69"/><ellipse cx="652.6" cy="258.7" rx="2.6" ry="3.6" opacity="0.85"/><ellipse cx="775.1" cy="321.2" rx="4.3" ry="3.5" opacity="0.81"/><ellipse cx="742.6" cy="311.1" rx="2.5" ry="3.5" opacity="0.60"/><ellipse cx="652.7" cy="310.3" rx="4.1" ry="3.8" opacity="0.92"/><ellipse cx="775.8" cy="317.2" rx="2.9" ry="2.0" opacity="0.80"/><ellipse cx="753.8" cy="308.3" rx="4.7" ry="3.7" opacity="0.73"/><ellipse cx="768.4" cy="297.1" rx="3.6" ry="2.5" opacity="0.63"/><ellipse cx="712.5" cy="308.9" rx="4.4" ry="2.8" opacity="0.61"/><ellipse cx="639.2" cy="257.9" rx="4.2" ry="3.2" opacity="0.92"/><ellipse cx="650.3" cy="322.0" rx="5.2" ry="2.2" opacity="0.93"/><ellipse cx="705.9" cy="325.1" rx="4.7" ry="2.3" opacity="0.59"/><ellipse cx="687.3" cy="284.0" rx="1.9" ry="3.7" opacity="0.72"/><ellipse cx="677.8" cy="306.2" rx="2.7" ry="2.0" opacity="0.74"/><ellipse cx="633.1" cy="270.1" rx="2.1" ry="1.6" opacity="0.63"/><ellipse cx="665.0" cy="262.1" rx="3.6" ry="3.9" opacity="0.51"/><ellipse cx="670.0" cy="301.1" rx="4.6" ry="2.9" opacity="0.77"/><ellipse cx="767.4" cy="319.9" rx="2.7" ry="2.9" opacity="0.95"/><ellipse cx="615.6" cy="289.5" rx="2.8" ry="3.3" opacity="0.81"/><ellipse cx="648.2" cy="308.2" rx="4.2" ry="3.3" opacity="0.68"/><ellipse cx="600.3" cy="265.1" rx="4.4" ry="2.6" opacity="0.51"/><ellipse cx="668.6" cy="291.4" rx="4.6" ry="2.5" opacity="0.77"/><ellipse cx="717.9" cy="295.1" rx="2.0" ry="3.3" opacity="0.51"/><ellipse cx="589.9" cy="248.0" rx="3.2" ry="2.7" opacity="0.50"/><ellipse cx="770.3" cy="315.5" rx="3.6" ry="3.0" opacity="0.61"/><ellipse cx="645.2" cy="260.9" rx="5.0" ry="2.8" opacity="0.66"/><ellipse cx="663.5" cy="318.6" rx="2.8" ry="3.5" opacity="0.80"/><ellipse cx="673.0" cy="273.4" rx="3.4" ry="2.6" opacity="0.61"/><ellipse cx="645.2" cy="308.7" rx="3.5" ry="2.7" opacity="0.89"/><ellipse cx="674.2" cy="274.3" rx="5.1" ry="3.9" opacity="0.84"/><ellipse cx="664.0" cy="299.9" rx="4.5" ry="2.2" opacity="0.81"/><ellipse cx="769.6" cy="298.5" rx="4.3" ry="2.6" opacity="0.78"/><ellipse cx="630.2" cy="308.5" rx="3.8" ry="3.9" opacity="0.62"/><ellipse cx="666.8" cy="308.1" rx="2.8" ry="3.0" opacity="0.56"/><ellipse cx="663.4" cy="327.8" rx="2.5" ry="3.8" opacity="0.48"/><ellipse cx="698.9" cy="312.9" rx="4.9" ry="2.5" opacity="0.75"/><ellipse cx="723.8" cy="307.7" rx="4.6" ry="2.9" opacity="0.58"/><ellipse cx="722.5" cy="290.3" rx="3.8" ry="4.0" opacity="0.52"/><ellipse cx="639.5" cy="290.9" rx="3.8" ry="2.7" opacity="0.53"/><ellipse cx="707.1" cy="319.1" rx="4.3" ry="2.2" opacity="0.85"/><ellipse cx="696.3" cy="324.3" rx="3.1" ry="3.4" opacity="0.49"/><ellipse cx="644.5" cy="301.7" rx="4.4" ry="3.6" opacity="0.64"/><ellipse cx="639.4" cy="272.8" rx="3.8" ry="1.6" opacity="0.64"/><ellipse cx="646.6" cy="317.3" rx="5.3" ry="2.1" opacity="0.54"/><ellipse cx="609.3" cy="249.1" rx="4.7" ry="3.3" opacity="0.58"/><ellipse cx="680.9" cy="302.0" rx="1.9" ry="3.5" opacity="0.88"/><ellipse cx="627.4" cy="302.7" rx="4.4" ry="2.3" opacity="0.89"/><ellipse cx="628.7" cy="282.8" rx="3.0" ry="2.6" opacity="0.86"/><ellipse cx="696.4" cy="294.5" rx="5.5" ry="2.1" opacity="0.56"/><ellipse cx="671.4" cy="279.1" rx="4.9" ry="3.8" opacity="0.79"/><ellipse cx="619.7" cy="272.5" rx="4.4" ry="2.0" opacity="0.89"/><ellipse cx="656.8" cy="261.5" rx="4.5" ry="1.6" opacity="0.80"/><ellipse cx="691.3" cy="292.2" rx="2.2" ry="1.6" opacity="0.63"/><ellipse cx="606.3" cy="243.5" rx="4.4" ry="1.9" opacity="0.59"/><ellipse cx="715.1" cy="302.0" rx="3.0" ry="2.7" opacity="0.59"/><ellipse cx="656.0" cy="263.3" rx="2.9" ry="2.2" opacity="0.46"/><ellipse cx="646.4" cy="293.0" rx="2.8" ry="1.8" opacity="0.87"/><ellipse cx="677.0" cy="286.1" rx="3.0" ry="3.7" opacity="0.83"/><ellipse cx="706.6" cy="298.8" rx="4.4" ry="2.8" opacity="0.66"/><ellipse cx="661.8" cy="285.4" rx="3.5" ry="2.8" opacity="0.72"/><ellipse cx="738.5" cy="319.1" rx="2.6" ry="1.6" opacity="0.60"/><ellipse cx="747.7" cy="301.0" rx="4.4" ry="3.4" opacity="0.68"/><ellipse cx="663.2" cy="289.6" rx="5.1" ry="4.0" opacity="0.91"/><ellipse cx="488.4" cy="389.4" rx="2.9" ry="3.7" opacity="0.71"/><ellipse cx="494.1" cy="396.4" rx="2.4" ry="2.7" opacity="0.90"/><ellipse cx="477.0" cy="392.4" rx="3.0" ry="2.9" opacity="0.77"/><ellipse cx="440.9" cy="357.2" rx="1.9" ry="1.9" opacity="0.69"/><ellipse cx="446.3" cy="360.8" rx="2.9" ry="3.6" opacity="0.80"/><ellipse cx="469.6" cy="391.1" rx="2.0" ry="1.6" opacity="0.94"/><ellipse cx="468.1" cy="370.4" rx="2.3" ry="3.0" opacity="0.91"/><ellipse cx="497.3" cy="413.2" rx="4.6" ry="3.3" opacity="0.48"/><ellipse cx="443.5" cy="340.3" rx="1.9" ry="3.7" opacity="0.64"/><ellipse cx="434.6" cy="341.2" rx="4.9" ry="3.0" opacity="0.91"/><ellipse cx="458.1" cy="356.1" rx="2.2" ry="2.0" opacity="0.77"/><ellipse cx="444.2" cy="353.8" rx="3.8" ry="2.4" opacity="0.52"/><ellipse cx="491.3" cy="388.7" rx="3.2" ry="2.7" opacity="0.47"/><ellipse cx="470.5" cy="392.2" rx="5.3" ry="1.8" opacity="0.64"/><ellipse cx="529.1" cy="439.3" rx="4.9" ry="3.1" opacity="0.93"/><ellipse cx="525.3" cy="438.0" rx="2.8" ry="2.4" opacity="0.80"/><ellipse cx="424.5" cy="336.6" rx="3.0" ry="2.2" opacity="0.95"/><ellipse cx="525.2" cy="432.7" rx="3.4" ry="2.3" opacity="0.65"/><ellipse cx="491.7" cy="405.9" rx="5.4" ry="1.6" opacity="0.50"/><ellipse cx="443.4" cy="343.0" rx="3.8" ry="1.8" opacity="0.75"/><ellipse cx="510.1" cy="427.4" rx="3.9" ry="3.0" opacity="0.88"/><ellipse cx="484.3" cy="389.0" rx="2.0" ry="1.8" opacity="0.75"/><ellipse cx="478.0" cy="388.5" rx="4.8" ry="2.5" opacity="0.91"/><ellipse cx="481.3" cy="377.4" rx="3.6" ry="2.4" opacity="0.95"/><ellipse cx="442.1" cy="351.8" rx="3.4" ry="3.0" opacity="0.83"/><ellipse cx="440.0" cy="350.4" rx="5.1" ry="3.4" opacity="0.48"/><ellipse cx="476.9" cy="398.7" rx="2.0" ry="3.8" opacity="0.62"/><ellipse cx="437.2" cy="340.2" rx="4.2" ry="2.7" opacity="0.90"/><ellipse cx="533.1" cy="434.1" rx="4.1" ry="2.3" opacity="0.81"/><ellipse cx="461.7" cy="353.7" rx="4.6" ry="3.4" opacity="0.62"/><ellipse cx="438.3" cy="346.2" rx="2.4" ry="3.6" opacity="0.70"/><ellipse cx="494.8" cy="399.6" rx="4.6" ry="3.0" opacity="0.89"/><ellipse cx="472.7" cy="374.1" rx="4.2" ry="2.4" opacity="0.63"/><ellipse cx="524.1" cy="418.8" rx="4.3" ry="3.6" opacity="0.64"/><ellipse cx="518.4" cy="431.3" rx="2.9" ry="2.4" opacity="0.51"/><ellipse cx="465.9" cy="385.2" rx="2.5" ry="2.2" opacity="0.66"/><ellipse cx="446.9" cy="348.7" rx="2.1" ry="3.5" opacity="0.75"/><ellipse cx="435.8" cy="345.9" rx="3.3" ry="1.9" opacity="0.95"/><ellipse cx="473.1" cy="389.5" rx="4.4" ry="3.2" opacity="0.73"/><ellipse cx="517.2" cy="421.4" rx="2.1" ry="1.9" opacity="0.47"/><ellipse cx="460.8" cy="381.6" rx="3.5" ry="2.9" opacity="0.59"/><ellipse cx="523.9" cy="419.1" rx="1.8" ry="2.9" opacity="0.50"/><ellipse cx="493.9" cy="405.1" rx="3.3" ry="2.8" opacity="0.55"/><ellipse cx="440.6" cy="356.7" rx="3.8" ry="3.0" opacity="0.45"/><ellipse cx="521.6" cy="437.0" rx="2.5" ry="3.4" opacity="0.86"/><ellipse cx="438.6" cy="353.3" rx="2.7" ry="3.8" opacity="0.90"/><ellipse cx="465.9" cy="361.2" rx="4.2" ry="3.3" opacity="0.84"/><ellipse cx="475.8" cy="383.4" rx="3.5" ry="2.4" opacity="0.68"/><ellipse cx="505.0" cy="409.7" rx="3.0" ry="2.9" opacity="0.52"/><ellipse cx="467.8" cy="368.4" rx="2.3" ry="3.0" opacity="0.87"/><ellipse cx="509.6" cy="417.8" rx="2.1" ry="2.0" opacity="0.61"/><ellipse cx="514.9" cy="412.3" rx="2.9" ry="2.6" opacity="0.63"/><ellipse cx="565.8" cy="370.5" rx="2.8" ry="3.5" opacity="0.91"/><ellipse cx="575.3" cy="381.5" rx="5.3" ry="1.9" opacity="0.95"/><ellipse cx="540.0" cy="338.0" rx="3.4" ry="3.6" opacity="0.79"/><ellipse cx="534.8" cy="336.9" rx="2.9" ry="2.5" opacity="0.92"/><ellipse cx="574.8" cy="372.3" rx="2.1" ry="2.1" opacity="0.82"/><ellipse cx="556.1" cy="333.1" rx="2.0" ry="1.6" opacity="0.66"/><ellipse cx="571.2" cy="344.5" rx="3.9" ry="2.2" opacity="0.46"/><ellipse cx="567.2" cy="343.0" rx="2.8" ry="1.6" opacity="0.60"/><ellipse cx="557.6" cy="347.4" rx="3.7" ry="1.6" opacity="0.50"/><ellipse cx="588.8" cy="354.8" rx="3.6" ry="2.4" opacity="0.83"/><ellipse cx="568.1" cy="370.5" rx="4.9" ry="3.7" opacity="0.81"/><ellipse cx="580.6" cy="348.6" rx="3.8" ry="2.9" opacity="0.71"/><ellipse cx="591.3" cy="374.8" rx="2.0" ry="3.4" opacity="0.76"/><ellipse cx="575.1" cy="378.1" rx="2.0" ry="2.7" opacity="0.64"/><ellipse cx="586.5" cy="350.4" rx="4.5" ry="2.3" opacity="0.89"/><ellipse cx="531.6" cy="332.9" rx="4.5" ry="3.7" opacity="0.84"/><ellipse cx="583.2" cy="366.4" rx="2.0" ry="3.8" opacity="0.71"/><ellipse cx="596.2" cy="379.9" rx="2.3" ry="2.6" opacity="0.59"/><ellipse cx="555.6" cy="345.2" rx="3.5" ry="2.6" opacity="0.75"/><ellipse cx="600.2" cy="379.7" rx="5.2" ry="3.6" opacity="0.56"/><ellipse cx="549.0" cy="348.4" rx="4.2" ry="3.0" opacity="0.62"/><ellipse cx="532.5" cy="324.0" rx="2.6" ry="3.3" opacity="0.87"/><ellipse cx="534.1" cy="333.7" rx="2.7" ry="3.5" opacity="0.90"/><ellipse cx="583.8" cy="349.3" rx="4.6" ry="3.4" opacity="0.70"/><ellipse cx="551.0" cy="352.8" rx="4.3" ry="2.3" opacity="0.77"/><ellipse cx="546.6" cy="333.0" rx="5.4" ry="3.9" opacity="0.91"/><ellipse cx="592.9" cy="374.2" rx="4.8" ry="2.9" opacity="0.49"/><ellipse cx="584.9" cy="373.3" rx="4.9" ry="1.6" opacity="0.48"/><ellipse cx="584.8" cy="350.3" rx="5.1" ry="4.0" opacity="0.67"/><ellipse cx="580.7" cy="362.0" rx="4.4" ry="2.4" opacity="0.77"/><ellipse cx="584.3" cy="371.1" rx="3.5" ry="2.0" opacity="0.68"/><ellipse cx="581.1" cy="354.3" rx="2.2" ry="1.5" opacity="0.65"/><ellipse cx="549.1" cy="333.0" rx="2.6" ry="2.5" opacity="0.80"/><ellipse cx="598.2" cy="362.8" rx="1.9" ry="3.7" opacity="0.75"/><ellipse cx="584.9" cy="358.6" rx="3.1" ry="2.3" opacity="0.49"/><ellipse cx="581.2" cy="378.3" rx="4.3" ry="3.0" opacity="0.85"/><ellipse cx="601.7" cy="371.8" rx="5.5" ry="2.6" opacity="0.46"/><ellipse cx="576.2" cy="360.3" rx="5.0" ry="3.0" opacity="0.63"/><ellipse cx="577.0" cy="383.2" rx="4.0" ry="3.6" opacity="0.84"/><ellipse cx="531.9" cy="339.6" rx="3.1" ry="4.0" opacity="0.65"/><ellipse cx="538.2" cy="338.2" rx="3.3" ry="1.8" opacity="0.75"/><ellipse cx="605.2" cy="511.2" rx="3.1" ry="3.9" opacity="0.55"/><ellipse cx="614.7" cy="474.2" rx="1.9" ry="2.3" opacity="0.90"/><ellipse cx="593.6" cy="491.1" rx="3.7" ry="2.2" opacity="0.72"/><ellipse cx="573.6" cy="482.1" rx="2.9" ry="3.5" opacity="0.84"/><ellipse cx="629.7" cy="497.9" rx="5.0" ry="3.4" opacity="0.48"/><ellipse cx="579.4" cy="507.8" rx="4.9" ry="4.0" opacity="0.84"/><ellipse cx="581.8" cy="496.1" rx="4.1" ry="3.0" opacity="0.52"/><ellipse cx="653.3" cy="492.5" rx="2.8" ry="4.0" opacity="0.64"/><ellipse cx="574.0" cy="502.7" rx="2.8" ry="2.0" opacity="0.60"/><ellipse cx="621.4" cy="480.2" rx="4.3" ry="3.8" opacity="0.95"/><ellipse cx="590.2" cy="512.7" rx="2.1" ry="3.0" opacity="0.49"/><ellipse cx="579.0" cy="505.8" rx="3.8" ry="1.5" opacity="0.85"/><ellipse cx="640.1" cy="491.6" rx="3.5" ry="1.6" opacity="0.80"/><ellipse cx="571.3" cy="493.5" rx="5.2" ry="3.2" opacity="0.51"/><ellipse cx="631.5" cy="504.8" rx="3.0" ry="3.4" opacity="0.74"/><ellipse cx="604.3" cy="493.5" rx="2.8" ry="2.2" opacity="0.89"/><ellipse cx="598.7" cy="509.3" rx="3.2" ry="2.0" opacity="0.45"/><ellipse cx="652.9" cy="508.0" rx="5.4" ry="3.0" opacity="0.48"/><ellipse cx="621.9" cy="499.7" rx="5.3" ry="2.2" opacity="0.57"/><ellipse cx="587.4" cy="469.1" rx="1.9" ry="2.7" opacity="0.66"/><ellipse cx="600.3" cy="520.8" rx="3.0" ry="3.6" opacity="0.72"/><ellipse cx="621.6" cy="515.9" rx="2.0" ry="3.3" opacity="0.57"/><ellipse cx="628.5" cy="513.2" rx="4.5" ry="2.1" opacity="0.53"/><ellipse cx="649.4" cy="494.4" rx="2.0" ry="2.4" opacity="0.91"/><ellipse cx="599.3" cy="472.7" rx="3.4" ry="3.0" opacity="0.78"/><ellipse cx="576.4" cy="494.0" rx="2.0" ry="2.6" opacity="0.85"/><ellipse cx="591.0" cy="512.6" rx="2.7" ry="2.5" opacity="0.85"/><ellipse cx="615.2" cy="505.6" rx="5.3" ry="3.2" opacity="0.56"/><ellipse cx="585.4" cy="490.6" rx="2.8" ry="2.9" opacity="0.49"/><ellipse cx="629.1" cy="486.4" rx="2.0" ry="1.8" opacity="0.92"/><ellipse cx="642.8" cy="516.3" rx="3.2" ry="4.0" opacity="0.54"/><ellipse cx="631.9" cy="520.2" rx="2.6" ry="1.5" opacity="0.51"/><ellipse cx="575.2" cy="511.3" rx="4.0" ry="2.7" opacity="0.51"/><ellipse cx="624.6" cy="468.4" rx="2.3" ry="3.0" opacity="0.77"/><ellipse cx="638.5" cy="512.8" rx="2.3" ry="2.3" opacity="0.52"/><ellipse cx="644.4" cy="503.5" rx="4.8" ry="2.7" opacity="0.91"/><ellipse cx="641.5" cy="513.0" rx="4.8" ry="2.0" opacity="0.62"/><ellipse cx="572.8" cy="508.8" rx="3.6" ry="4.0" opacity="0.59"/><ellipse cx="605.9" cy="515.4" rx="5.4" ry="3.4" opacity="0.89"/><ellipse cx="649.4" cy="477.1" rx="4.1" ry="1.7" opacity="0.79"/><ellipse cx="651.9" cy="492.2" rx="2.3" ry="2.9" opacity="0.48"/><ellipse cx="608.6" cy="464.8" rx="3.3" ry="3.5" opacity="0.82"/><ellipse cx="643.2" cy="489.1" rx="3.4" ry="1.6" opacity="0.84"/><ellipse cx="618.1" cy="485.9" rx="2.3" ry="2.6" opacity="0.48"/><ellipse cx="605.4" cy="468.5" rx="4.9" ry="3.0" opacity="0.88"/><ellipse cx="616.7" cy="469.9" rx="2.8" ry="3.6" opacity="0.74"/><ellipse cx="624.9" cy="500.3" rx="2.0" ry="2.0" opacity="0.67"/><ellipse cx="620.0" cy="476.3" rx="2.0" ry="2.9" opacity="0.65"/><ellipse cx="570.4" cy="511.6" rx="5.0" ry="1.9" opacity="0.46"/><ellipse cx="618.7" cy="475.5" rx="4.1" ry="3.8" opacity="0.82"/><ellipse cx="592.6" cy="498.7" rx="2.9" ry="3.4" opacity="0.58"/><ellipse cx="644.6" cy="503.3" rx="5.1" ry="2.4" opacity="0.93"/><ellipse cx="619.2" cy="476.2" rx="4.2" ry="2.3" opacity="0.51"/><ellipse cx="571.3" cy="498.9" rx="2.7" ry="1.8" opacity="0.84"/><ellipse cx="580.4" cy="508.2" rx="2.8" ry="2.4" opacity="0.92"/><ellipse cx="641.0" cy="513.3" rx="5.4" ry="3.0" opacity="0.92"/><ellipse cx="622.8" cy="497.1" rx="3.0" ry="2.4" opacity="0.73"/><ellipse cx="589.7" cy="500.9" rx="5.0" ry="3.3" opacity="0.56"/><ellipse cx="606.2" cy="514.1" rx="3.8" ry="2.8" opacity="0.75"/><ellipse cx="616.7" cy="503.3" rx="3.9" ry="2.9" opacity="0.57"/><ellipse cx="578.7" cy="487.9" rx="5.1" ry="3.9" opacity="0.60"/><ellipse cx="618.6" cy="493.0" rx="3.5" ry="1.9" opacity="0.84"/><ellipse cx="592.4" cy="472.7" rx="2.5" ry="1.7" opacity="0.71"/><ellipse cx="583.0" cy="501.0" rx="4.0" ry="3.1" opacity="0.69"/><ellipse cx="621.9" cy="478.6" rx="3.5" ry="3.2" opacity="0.56"/><ellipse cx="632.6" cy="497.3" rx="5.4" ry="3.0" opacity="0.72"/><ellipse cx="635.7" cy="478.2" rx="3.2" ry="2.6" opacity="0.82"/><ellipse cx="631.3" cy="471.5" rx="5.3" ry="4.0" opacity="0.70"/><ellipse cx="601.8" cy="465.2" rx="1.9" ry="3.0" opacity="0.81"/><ellipse cx="622.2" cy="510.0" rx="3.4" ry="3.4" opacity="0.75"/><ellipse cx="623.8" cy="494.9" rx="4.3" ry="2.9" opacity="0.50"/><ellipse cx="627.4" cy="504.9" rx="3.4" ry="3.9" opacity="0.69"/><ellipse cx="582.5" cy="492.5" rx="3.1" ry="1.9" opacity="0.89"/><ellipse cx="583.5" cy="505.5" rx="2.4" ry="2.8" opacity="0.95"/><ellipse cx="575.7" cy="514.9" rx="1.8" ry="3.9" opacity="0.90"/><ellipse cx="607.4" cy="500.7" rx="3.5" ry="1.9" opacity="0.63"/><ellipse cx="606.8" cy="515.6" rx="2.2" ry="2.8" opacity="0.69"/><ellipse cx="616.6" cy="510.6" rx="4.0" ry="2.3" opacity="0.93"/><ellipse cx="620.7" cy="477.1" rx="3.8" ry="3.7" opacity="0.47"/><ellipse cx="625.0" cy="491.0" rx="2.9" ry="1.9" opacity="0.57"/><ellipse cx="606.5" cy="486.8" rx="4.0" ry="2.2" opacity="0.76"/><ellipse cx="609.6" cy="510.8" rx="4.8" ry="2.1" opacity="0.94"/><ellipse cx="559.6" cy="569.2" rx="2.7" ry="3.3" opacity="0.67"/><ellipse cx="573.2" cy="557.3" rx="5.0" ry="2.2" opacity="0.89"/><ellipse cx="548.9" cy="579.2" rx="3.9" ry="2.8" opacity="0.72"/><ellipse cx="532.7" cy="522.9" rx="2.5" ry="2.7" opacity="0.87"/><ellipse cx="536.6" cy="592.9" rx="5.4" ry="3.1" opacity="0.88"/><ellipse cx="572.2" cy="554.8" rx="3.2" ry="2.7" opacity="0.50"/><ellipse cx="597.1" cy="591.7" rx="2.5" ry="2.7" opacity="0.85"/><ellipse cx="532.5" cy="607.5" rx="2.1" ry="2.1" opacity="0.54"/><ellipse cx="555.5" cy="622.7" rx="2.6" ry="3.2" opacity="0.74"/><ellipse cx="538.4" cy="669.5" rx="3.5" ry="2.8" opacity="0.54"/><ellipse cx="513.7" cy="616.3" rx="2.2" ry="1.6" opacity="0.49"/><ellipse cx="559.2" cy="548.2" rx="2.8" ry="3.4" opacity="0.67"/><ellipse cx="519.9" cy="621.4" rx="5.5" ry="3.1" opacity="0.67"/><ellipse cx="558.8" cy="625.0" rx="4.9" ry="3.5" opacity="0.57"/><ellipse cx="518.0" cy="595.4" rx="2.5" ry="2.9" opacity="0.59"/><ellipse cx="599.0" cy="584.1" rx="4.8" ry="3.9" opacity="0.68"/><ellipse cx="581.6" cy="593.1" rx="3.3" ry="1.8" opacity="0.78"/><ellipse cx="536.8" cy="598.1" rx="3.1" ry="2.5" opacity="0.84"/><ellipse cx="556.1" cy="540.8" rx="4.5" ry="2.1" opacity="0.65"/><ellipse cx="529.9" cy="609.0" rx="3.4" ry="3.2" opacity="0.66"/><ellipse cx="583.1" cy="602.0" rx="2.2" ry="2.7" opacity="0.58"/><ellipse cx="534.9" cy="662.1" rx="3.6" ry="3.3" opacity="0.53"/><ellipse cx="527.3" cy="537.8" rx="1.9" ry="3.8" opacity="0.93"/><ellipse cx="541.8" cy="520.4" rx="4.5" ry="3.2" opacity="0.47"/><ellipse cx="528.5" cy="636.5" rx="4.6" ry="2.1" opacity="0.70"/><ellipse cx="584.8" cy="609.9" rx="3.7" ry="2.0" opacity="0.48"/><ellipse cx="524.0" cy="597.9" rx="4.0" ry="2.7" opacity="0.77"/><ellipse cx="561.3" cy="616.3" rx="3.3" ry="3.6" opacity="0.72"/><ellipse cx="573.8" cy="602.2" rx="2.7" ry="1.8" opacity="0.78"/><ellipse cx="530.0" cy="611.3" rx="3.8" ry="3.0" opacity="0.66"/><ellipse cx="529.1" cy="564.5" rx="4.4" ry="3.7" opacity="0.61"/><ellipse cx="536.5" cy="586.3" rx="3.4" ry="3.1" opacity="0.83"/><ellipse cx="549.9" cy="586.2" rx="4.2" ry="2.3" opacity="0.86"/><ellipse cx="546.8" cy="602.9" rx="3.7" ry="2.4" opacity="0.46"/><ellipse cx="532.9" cy="590.6" rx="5.3" ry="1.8" opacity="0.90"/><ellipse cx="533.1" cy="521.4" rx="5.1" ry="1.7" opacity="0.60"/><ellipse cx="523.0" cy="594.9" rx="2.1" ry="2.4" opacity="0.70"/><ellipse cx="586.5" cy="562.3" rx="4.3" ry="1.9" opacity="0.58"/><ellipse cx="511.1" cy="606.5" rx="4.0" ry="3.3" opacity="0.66"/><ellipse cx="523.2" cy="562.7" rx="3.8" ry="3.0" opacity="0.93"/><ellipse cx="599.1" cy="589.3" rx="2.6" ry="3.4" opacity="0.76"/><ellipse cx="590.2" cy="602.0" rx="2.7" ry="2.7" opacity="0.68"/><ellipse cx="540.3" cy="606.5" rx="2.4" ry="2.1" opacity="0.51"/><ellipse cx="578.6" cy="579.5" rx="5.1" ry="3.0" opacity="0.78"/><ellipse cx="533.7" cy="654.7" rx="3.1" ry="3.6" opacity="0.57"/><ellipse cx="523.0" cy="629.3" rx="2.4" ry="2.5" opacity="0.64"/><ellipse cx="538.5" cy="573.3" rx="2.4" ry="2.5" opacity="0.50"/><ellipse cx="584.3" cy="572.1" rx="4.4" ry="2.6" opacity="0.94"/><ellipse cx="597.7" cy="581.1" rx="4.0" ry="1.7" opacity="0.63"/><ellipse cx="537.9" cy="612.8" rx="1.8" ry="3.4" opacity="0.49"/><ellipse cx="547.3" cy="592.0" rx="4.9" ry="3.1" opacity="0.52"/><ellipse cx="571.5" cy="554.1" rx="4.1" ry="2.5" opacity="0.93"/><ellipse cx="549.9" cy="559.7" rx="2.9" ry="3.9" opacity="0.62"/><ellipse cx="529.4" cy="599.6" rx="4.3" ry="3.9" opacity="0.49"/><ellipse cx="538.0" cy="628.0" rx="3.6" ry="3.2" opacity="0.79"/><ellipse cx="514.5" cy="526.1" rx="2.5" ry="2.3" opacity="0.54"/><ellipse cx="533.8" cy="535.8" rx="1.9" ry="2.8" opacity="0.83"/><ellipse cx="521.1" cy="532.7" rx="4.5" ry="1.7" opacity="0.52"/><ellipse cx="554.0" cy="563.5" rx="4.7" ry="2.8" opacity="0.71"/><ellipse cx="542.5" cy="522.7" rx="4.8" ry="2.5" opacity="0.86"/><ellipse cx="558.9" cy="541.9" rx="2.1" ry="3.8" opacity="0.92"/><ellipse cx="578.1" cy="609.6" rx="3.6" ry="1.9" opacity="0.77"/><ellipse cx="549.3" cy="621.3" rx="2.0" ry="2.2" opacity="0.51"/><ellipse cx="581.1" cy="591.1" rx="2.9" ry="3.5" opacity="0.71"/><ellipse cx="534.2" cy="577.9" rx="1.8" ry="1.7" opacity="0.47"/><ellipse cx="558.9" cy="621.8" rx="2.2" ry="2.6" opacity="0.76"/><ellipse cx="545.9" cy="617.4" rx="3.1" ry="3.1" opacity="0.55"/><ellipse cx="553.9" cy="583.3" rx="3.7" ry="1.6" opacity="0.57"/><ellipse cx="565.9" cy="629.7" rx="4.7" ry="3.9" opacity="0.64"/><ellipse cx="544.6" cy="632.9" rx="1.9" ry="2.7" opacity="0.59"/><ellipse cx="560.6" cy="629.5" rx="5.0" ry="2.8" opacity="0.80"/><ellipse cx="513.2" cy="618.4" rx="5.2" ry="3.0" opacity="0.70"/><ellipse cx="556.0" cy="580.9" rx="2.5" ry="2.0" opacity="0.85"/><ellipse cx="556.5" cy="524.3" rx="4.1" ry="3.6" opacity="0.78"/><ellipse cx="523.2" cy="662.7" rx="2.5" ry="2.8" opacity="0.68"/><ellipse cx="521.8" cy="558.9" rx="2.5" ry="1.9" opacity="0.47"/><ellipse cx="569.4" cy="619.5" rx="2.7" ry="3.9" opacity="0.66"/><ellipse cx="550.6" cy="659.0" rx="4.2" ry="2.7" opacity="0.82"/><ellipse cx="578.8" cy="565.2" rx="2.1" ry="3.3" opacity="0.82"/><ellipse cx="564.9" cy="536.2" rx="4.6" ry="1.9" opacity="0.85"/><ellipse cx="567.1" cy="615.0" rx="2.1" ry="2.4" opacity="0.82"/><ellipse cx="516.3" cy="524.3" rx="3.3" ry="3.6" opacity="0.76"/><ellipse cx="528.1" cy="530.9" rx="4.9" ry="3.6" opacity="0.80"/><ellipse cx="525.8" cy="632.3" rx="1.8" ry="1.9" opacity="0.61"/><ellipse cx="521.3" cy="629.7" rx="4.6" ry="2.2" opacity="0.49"/><ellipse cx="595.5" cy="604.3" rx="2.1" ry="3.4" opacity="0.77"/><ellipse cx="551.2" cy="586.1" rx="4.2" ry="3.5" opacity="0.74"/><ellipse cx="539.7" cy="522.8" rx="4.0" ry="3.0" opacity="0.93"/><ellipse cx="560.7" cy="628.2" rx="4.6" ry="1.9" opacity="0.78"/><ellipse cx="548.8" cy="551.2" rx="2.8" ry="2.4" opacity="0.82"/><ellipse cx="560.1" cy="567.1" rx="2.0" ry="3.5" opacity="0.83"/><ellipse cx="551.3" cy="563.5" rx="4.8" ry="2.0" opacity="0.46"/><ellipse cx="550.1" cy="526.1" rx="1.9" ry="3.0" opacity="0.75"/><ellipse cx="559.2" cy="529.1" rx="3.9" ry="2.8" opacity="0.60"/><ellipse cx="527.5" cy="542.1" rx="3.6" ry="2.4" opacity="0.74"/><ellipse cx="572.2" cy="560.3" rx="4.0" ry="2.1" opacity="0.82"/><ellipse cx="525.6" cy="608.5" rx="4.5" ry="3.5" opacity="0.72"/><ellipse cx="584.0" cy="572.8" rx="2.8" ry="3.1" opacity="0.51"/><ellipse cx="522.9" cy="532.8" rx="4.2" ry="2.5" opacity="0.91"/><ellipse cx="585.4" cy="599.0" rx="3.1" ry="2.3" opacity="0.48"/><ellipse cx="516.3" cy="650.6" rx="2.9" ry="1.5" opacity="0.94"/><ellipse cx="543.1" cy="635.9" rx="3.5" ry="3.9" opacity="0.49"/><ellipse cx="552.3" cy="616.6" rx="1.9" ry="3.8" opacity="0.62"/><ellipse cx="596.3" cy="598.9" rx="2.1" ry="3.4" opacity="0.70"/><ellipse cx="561.5" cy="544.4" rx="2.3" ry="1.7" opacity="0.67"/><ellipse cx="534.0" cy="663.1" rx="2.0" ry="3.4" opacity="0.51"/><ellipse cx="515.6" cy="658.3" rx="2.6" ry="3.0" opacity="0.74"/><ellipse cx="545.0" cy="571.5" rx="2.3" ry="3.2" opacity="0.64"/><ellipse cx="540.4" cy="659.7" rx="4.1" ry="2.0" opacity="0.68"/><ellipse cx="555.8" cy="600.0" rx="2.6" ry="3.0" opacity="0.61"/><ellipse cx="588.9" cy="586.5" rx="2.4" ry="2.2" opacity="0.76"/><ellipse cx="514.7" cy="656.7" rx="2.6" ry="2.5" opacity="0.49"/><ellipse cx="550.6" cy="664.2" rx="2.5" ry="1.9" opacity="0.72"/><ellipse cx="568.9" cy="540.1" rx="2.6" ry="3.0" opacity="0.57"/><ellipse cx="536.1" cy="609.4" rx="4.1" ry="3.1" opacity="0.73"/><ellipse cx="528.5" cy="554.6" rx="2.1" ry="1.6" opacity="0.74"/><ellipse cx="513.9" cy="651.3" rx="5.3" ry="1.9" opacity="0.93"/><ellipse cx="543.4" cy="573.2" rx="2.9" ry="1.7" opacity="0.57"/><ellipse cx="553.1" cy="553.6" rx="5.2" ry="3.7" opacity="0.70"/><ellipse cx="584.9" cy="572.0" rx="4.6" ry="3.4" opacity="0.63"/><ellipse cx="578.8" cy="571.7" rx="2.4" ry="2.5" opacity="0.51"/><ellipse cx="576.6" cy="556.6" rx="3.6" ry="3.5" opacity="0.75"/><ellipse cx="564.4" cy="618.6" rx="3.8" ry="2.8" opacity="0.92"/><ellipse cx="535.1" cy="547.3" rx="3.7" ry="2.3" opacity="0.81"/><ellipse cx="526.0" cy="612.3" rx="3.3" ry="3.2" opacity="0.68"/><ellipse cx="516.4" cy="623.0" rx="5.4" ry="1.7" opacity="0.76"/><ellipse cx="566.2" cy="611.3" rx="3.7" ry="2.8" opacity="0.94"/><ellipse cx="591.9" cy="584.3" rx="4.8" ry="3.2" opacity="0.85"/><ellipse cx="526.4" cy="553.6" rx="4.8" ry="3.8" opacity="0.56"/><ellipse cx="553.5" cy="653.3" rx="4.5" ry="3.0" opacity="0.90"/><ellipse cx="566.3" cy="632.6" rx="2.9" ry="2.3" opacity="0.90"/><ellipse cx="514.6" cy="613.4" rx="4.5" ry="3.9" opacity="0.81"/><ellipse cx="533.1" cy="533.8" rx="2.4" ry="2.1" opacity="0.74"/><ellipse cx="537.4" cy="541.0" rx="2.1" ry="3.2" opacity="0.86"/><ellipse cx="517.6" cy="596.3" rx="5.4" ry="2.4" opacity="0.72"/><ellipse cx="578.4" cy="570.5" rx="3.6" ry="3.9" opacity="0.48"/><ellipse cx="513.5" cy="615.5" rx="5.3" ry="1.9" opacity="0.54"/><ellipse cx="551.0" cy="638.0" rx="3.9" ry="3.1" opacity="0.48"/><ellipse cx="525.1" cy="607.2" rx="4.5" ry="1.7" opacity="0.50"/><ellipse cx="536.5" cy="581.3" rx="3.0" ry="1.9" opacity="0.49"/><ellipse cx="517.9" cy="611.8" rx="3.2" ry="3.6" opacity="0.75"/><ellipse cx="548.8" cy="531.4" rx="3.9" ry="2.1" opacity="0.80"/><ellipse cx="532.0" cy="597.3" rx="2.0" ry="3.4" opacity="0.81"/><ellipse cx="517.0" cy="612.5" rx="2.3" ry="2.8" opacity="0.50"/><ellipse cx="533.3" cy="586.7" rx="3.8" ry="3.1" opacity="0.91"/><ellipse cx="538.6" cy="571.5" rx="2.6" ry="3.3" opacity="0.63"/><ellipse cx="526.3" cy="547.6" rx="3.4" ry="3.6" opacity="0.67"/><ellipse cx="586.1" cy="589.9" rx="4.0" ry="2.1" opacity="0.65"/><ellipse cx="550.4" cy="556.8" rx="2.9" ry="2.3" opacity="0.55"/><ellipse cx="529.0" cy="558.4" rx="2.5" ry="3.6" opacity="0.79"/><ellipse cx="524.0" cy="566.0" rx="3.7" ry="3.6" opacity="0.87"/><ellipse cx="547.9" cy="519.4" rx="3.1" ry="1.8" opacity="0.89"/><ellipse cx="526.2" cy="566.8" rx="2.4" ry="3.6" opacity="0.51"/><ellipse cx="549.0" cy="551.9" rx="2.7" ry="4.0" opacity="0.81"/><ellipse cx="578.4" cy="572.3" rx="5.4" ry="3.9" opacity="0.77"/><ellipse cx="527.9" cy="525.9" rx="3.8" ry="2.7" opacity="0.88"/><ellipse cx="529.4" cy="667.7" rx="4.1" ry="1.6" opacity="0.55"/><ellipse cx="534.9" cy="635.4" rx="3.8" ry="2.7" opacity="0.71"/><ellipse cx="544.5" cy="647.7" rx="2.4" ry="2.4" opacity="0.61"/><ellipse cx="586.5" cy="591.1" rx="2.0" ry="2.2" opacity="0.84"/><ellipse cx="534.5" cy="532.8" rx="3.4" ry="2.9" opacity="0.51"/><ellipse cx="542.7" cy="602.8" rx="4.6" ry="2.5" opacity="0.95"/><ellipse cx="530.7" cy="632.1" rx="2.1" ry="3.8" opacity="0.72"/><ellipse cx="522.5" cy="642.0" rx="5.1" ry="1.8" opacity="0.89"/><ellipse cx="561.6" cy="577.2" rx="3.0" ry="3.5" opacity="0.84"/><ellipse cx="561.9" cy="625.4" rx="2.6" ry="1.6" opacity="0.90"/><ellipse cx="538.3" cy="584.9" rx="4.8" ry="1.7" opacity="0.81"/><ellipse cx="575.5" cy="588.6" rx="5.3" ry="3.1" opacity="0.89"/><ellipse cx="524.6" cy="580.3" rx="2.9" ry="2.7" opacity="0.83"/><ellipse cx="553.9" cy="534.4" rx="5.1" ry="2.4" opacity="0.57"/><ellipse cx="706.6" cy="666.8" rx="4.1" ry="2.6" opacity="0.53"/><ellipse cx="723.8" cy="639.0" rx="3.7" ry="2.5" opacity="0.90"/><ellipse cx="735.2" cy="628.0" rx="3.0" ry="2.6" opacity="0.60"/><ellipse cx="733.0" cy="614.5" rx="3.9" ry="3.3" opacity="0.62"/><ellipse cx="731.2" cy="630.4" rx="4.1" ry="1.8" opacity="0.61"/><ellipse cx="720.6" cy="646.2" rx="3.5" ry="1.6" opacity="0.72"/><ellipse cx="739.7" cy="625.3" rx="2.6" ry="3.1" opacity="0.57"/><ellipse cx="702.3" cy="632.0" rx="5.4" ry="3.9" opacity="0.77"/><ellipse cx="724.9" cy="629.6" rx="2.1" ry="2.3" opacity="0.57"/><ellipse cx="725.1" cy="648.9" rx="4.1" ry="3.8" opacity="0.45"/><ellipse cx="708.7" cy="664.7" rx="3.5" ry="3.5" opacity="0.54"/><ellipse cx="707.7" cy="657.7" rx="2.9" ry="3.3" opacity="0.75"/><ellipse cx="708.1" cy="669.1" rx="3.2" ry="2.2" opacity="0.95"/><ellipse cx="722.4" cy="651.4" rx="3.6" ry="3.1" opacity="0.64"/><ellipse cx="699.8" cy="651.2" rx="2.1" ry="1.8" opacity="0.70"/><ellipse cx="698.5" cy="639.9" rx="1.9" ry="2.8" opacity="0.47"/><ellipse cx="707.1" cy="637.8" rx="2.6" ry="1.7" opacity="0.51"/><ellipse cx="698.2" cy="662.6" rx="1.9" ry="1.9" opacity="0.77"/><ellipse cx="738.4" cy="628.1" rx="4.5" ry="3.8" opacity="0.90"/><ellipse cx="712.0" cy="643.8" rx="5.2" ry="2.9" opacity="0.46"/><ellipse cx="713.5" cy="662.1" rx="4.4" ry="2.7" opacity="0.92"/><ellipse cx="732.8" cy="622.4" rx="4.4" ry="3.7" opacity="0.45"/><ellipse cx="705.5" cy="627.3" rx="2.6" ry="3.1" opacity="0.85"/><ellipse cx="710.6" cy="657.3" rx="4.5" ry="4.0" opacity="0.89"/><ellipse cx="718.7" cy="654.0" rx="4.8" ry="2.8" opacity="0.79"/><ellipse cx="697.4" cy="660.9" rx="4.6" ry="1.9" opacity="0.53"/><ellipse cx="726.7" cy="646.9" rx="2.4" ry="3.8" opacity="0.56"/><ellipse cx="693.1" cy="651.6" rx="3.8" ry="3.8" opacity="0.67"/><ellipse cx="711.3" cy="622.9" rx="4.9" ry="2.3" opacity="0.91"/><ellipse cx="687.7" cy="663.2" rx="1.9" ry="3.3" opacity="0.92"/><ellipse cx="705.6" cy="644.9" rx="3.3" ry="1.7" opacity="0.87"/><ellipse cx="716.4" cy="657.8" rx="1.9" ry="1.9" opacity="0.56"/><ellipse cx="709.7" cy="660.6" rx="5.0" ry="2.1" opacity="0.82"/><ellipse cx="707.9" cy="655.7" rx="4.2" ry="1.7" opacity="0.68"/><ellipse cx="712.0" cy="636.8" rx="3.9" ry="3.2" opacity="0.65"/><ellipse cx="887.6" cy="586.0" rx="2.3" ry="2.2" opacity="0.93"/><ellipse cx="894.2" cy="587.0" rx="3.2" ry="2.1" opacity="0.93"/><ellipse cx="874.3" cy="604.9" rx="5.4" ry="3.5" opacity="0.88"/><ellipse cx="868.0" cy="605.0" rx="3.6" ry="3.9" opacity="0.72"/><ellipse cx="868.7" cy="608.1" rx="3.3" ry="3.2" opacity="0.75"/><ellipse cx="857.5" cy="614.7" rx="3.5" ry="3.4" opacity="0.93"/><ellipse cx="891.1" cy="586.3" rx="3.2" ry="3.0" opacity="0.58"/><ellipse cx="872.5" cy="595.6" rx="3.9" ry="3.1" opacity="0.75"/><ellipse cx="878.8" cy="591.6" rx="5.2" ry="2.1" opacity="0.49"/><ellipse cx="881.3" cy="602.5" rx="5.2" ry="3.6" opacity="0.54"/><ellipse cx="873.6" cy="600.3" rx="4.4" ry="3.2" opacity="0.50"/><ellipse cx="875.6" cy="592.4" rx="4.2" ry="1.9" opacity="0.60"/><ellipse cx="854.5" cy="627.2" rx="5.2" ry="3.7" opacity="0.48"/><ellipse cx="887.6" cy="589.1" rx="5.4" ry="2.2" opacity="0.70"/><ellipse cx="884.4" cy="598.5" rx="3.1" ry="1.8" opacity="0.91"/><ellipse cx="870.9" cy="614.4" rx="2.7" ry="3.8" opacity="0.50"/><ellipse cx="877.2" cy="595.7" rx="5.3" ry="2.6" opacity="0.87"/><ellipse cx="865.4" cy="610.6" rx="3.2" ry="2.3" opacity="0.69"/><ellipse cx="847.9" cy="638.0" rx="4.9" ry="3.7" opacity="0.57"/><ellipse cx="809.4" cy="155.5" rx="3.7" ry="2.5" opacity="0.72"/><ellipse cx="808.2" cy="180.5" rx="4.2" ry="2.2" opacity="0.55"/><ellipse cx="804.5" cy="156.8" rx="3.4" ry="2.8" opacity="0.83"/><ellipse cx="805.6" cy="167.3" rx="1.8" ry="3.1" opacity="0.47"/><ellipse cx="811.2" cy="171.1" rx="3.2" ry="4.0" opacity="0.61"/><ellipse cx="800.3" cy="144.8" rx="2.7" ry="3.3" opacity="0.82"/><ellipse cx="806.7" cy="187.3" rx="2.4" ry="2.1" opacity="0.74"/><ellipse cx="810.0" cy="182.2" rx="2.9" ry="3.8" opacity="0.77"/><ellipse cx="813.0" cy="170.4" rx="2.6" ry="2.9" opacity="0.92"/><ellipse cx="800.3" cy="157.1" rx="2.9" ry="2.1" opacity="0.84"/><ellipse cx="812.2" cy="146.4" rx="4.4" ry="3.7" opacity="0.48"/><ellipse cx="800.4" cy="171.9" rx="5.1" ry="2.9" opacity="0.70"/><ellipse cx="807.7" cy="170.0" rx="5.2" ry="3.0" opacity="0.82"/><ellipse cx="808.8" cy="187.3" rx="4.6" ry="2.8" opacity="0.60"/></g>
<polygon points="482.4,261.2 502.8,260.4 502.8,269.8 497.3,278.4 482.4,279.2" fill="#bddbb0"/>
<polygon points="549.1,240.0 558.6,240.0 560.1,252.5 550.7,252.5" fill="#bddbb0"/>
<polygon points="574.3,254.1 582.1,249.4 582.1,269.8 574.3,269.8" fill="#bddbb0"/>
<polygon points="555.4,305.9 566.4,302.8 569.5,315.3 560.1,320.0" fill="#bddbb0"/>
<polygon points="535.0,312.2 547.6,313.8 549.1,327.9 538.1,331.0" fill="#bddbb0"/>
<g fill="#f2efe9"><ellipse cx="334.4" cy="11.8" rx="6.9" ry="2.4" opacity="0.45"/><ellipse cx="338.5" cy="4.5" rx="6.0" ry="2.3" opacity="0.43"/><ellipse cx="309.8" cy="7.1" rx="5.5" ry="5.6" opacity="0.36"/><ellipse cx="324.7" cy="48.9" rx="8.7" ry="4.5" opacity="0.42"/><ellipse cx="397.7" cy="3.6" rx="8.2" ry="3.3" opacity="0.36"/><ellipse cx="314.4" cy="24.1" rx="7.9" ry="2.9" opacity="0.46"/><ellipse cx="365.0" cy="29.0" rx="6.3" ry="2.4" opacity="0.34"/><ellipse cx="323.0" cy="53.1" rx="5.6" ry="3.4" opacity="0.46"/><ellipse cx="347.0" cy="23.4" rx="7.8" ry="5.0" opacity="0.38"/><ellipse cx="358.7" cy="41.0" rx="8.3" ry="5.2" opacity="0.39"/><ellipse cx="398.1" cy="9.2" rx="5.5" ry="5.3" opacity="0.36"/><ellipse cx="350.4" cy="3.1" rx="7.0" ry="5.3" opacity="0.46"/><ellipse cx="387.9" cy="24.5" rx="7.2" ry="4.6" opacity="0.46"/><ellipse cx="347.3" cy="65.5" rx="8.7" ry="4.1" opacity="0.48"/><ellipse cx="308.9" cy="54.7" rx="6.9" ry="6.3" opacity="0.51"/><ellipse cx="330.6" cy="30.1" rx="7.0" ry="2.2" opacity="0.43"/><ellipse cx="312.6" cy="85.0" rx="3.4" ry="5.3" opacity="0.36"/><ellipse cx="317.1" cy="101.5" rx="8.2" ry="2.4" opacity="0.43"/><ellipse cx="334.3" cy="131.0" rx="7.9" ry="5.7" opacity="0.39"/><ellipse cx="326.7" cy="99.5" rx="8.3" ry="6.1" opacity="0.36"/><ellipse cx="313.0" cy="91.9" rx="4.4" ry="4.1" opacity="0.46"/><ellipse cx="318.0" cy="78.2" rx="5.5" ry="3.7" opacity="0.45"/><ellipse cx="357.3" cy="119.4" rx="6.1" ry="4.7" opacity="0.48"/><ellipse cx="306.1" cy="132.0" rx="7.7" ry="5.8" opacity="0.51"/><ellipse cx="283.4" cy="181.9" rx="3.7" ry="5.2" opacity="0.34"/><ellipse cx="255.7" cy="161.0" rx="4.1" ry="3.8" opacity="0.34"/><ellipse cx="250.0" cy="154.6" rx="3.7" ry="3.9" opacity="0.34"/><ellipse cx="324.3" cy="205.5" rx="4.0" ry="3.3" opacity="0.41"/><ellipse cx="281.0" cy="151.5" rx="8.9" ry="7.0" opacity="0.43"/><ellipse cx="291.1" cy="147.4" rx="3.7" ry="3.8" opacity="0.39"/><ellipse cx="320.5" cy="155.8" rx="3.2" ry="6.8" opacity="0.45"/><ellipse cx="262.5" cy="197.7" rx="3.2" ry="4.7" opacity="0.55"/><ellipse cx="323.4" cy="214.6" rx="4.8" ry="3.9" opacity="0.37"/><ellipse cx="315.6" cy="196.6" rx="8.5" ry="3.7" opacity="0.38"/><ellipse cx="319.0" cy="246.3" rx="9.0" ry="6.0" opacity="0.51"/><ellipse cx="312.9" cy="162.9" rx="6.6" ry="3.8" opacity="0.34"/><ellipse cx="252.4" cy="168.7" rx="4.8" ry="5.5" opacity="0.54"/><ellipse cx="288.0" cy="241.1" rx="9.9" ry="6.8" opacity="0.41"/><ellipse cx="268.7" cy="163.0" rx="4.4" ry="3.1" opacity="0.47"/><ellipse cx="326.5" cy="230.4" rx="6.4" ry="5.3" opacity="0.51"/><ellipse cx="257.2" cy="210.7" rx="9.4" ry="5.9" opacity="0.50"/><ellipse cx="290.6" cy="157.6" rx="8.5" ry="3.7" opacity="0.51"/><ellipse cx="396.9" cy="289.6" rx="5.4" ry="6.1" opacity="0.49"/><ellipse cx="308.7" cy="261.3" rx="3.9" ry="5.9" opacity="0.51"/><ellipse cx="306.1" cy="334.8" rx="8.9" ry="4.9" opacity="0.41"/><ellipse cx="350.4" cy="261.8" rx="3.1" ry="6.2" opacity="0.47"/><ellipse cx="347.9" cy="346.0" rx="5.6" ry="5.8" opacity="0.51"/><ellipse cx="313.2" cy="274.4" rx="4.8" ry="3.1" opacity="0.46"/><ellipse cx="318.5" cy="292.0" rx="3.8" ry="5.9" opacity="0.41"/><ellipse cx="340.4" cy="309.3" rx="8.4" ry="3.9" opacity="0.53"/><ellipse cx="345.2" cy="303.8" rx="6.1" ry="2.2" opacity="0.43"/><ellipse cx="310.1" cy="248.4" rx="7.8" ry="2.8" opacity="0.43"/><ellipse cx="369.8" cy="306.4" rx="5.0" ry="4.3" opacity="0.45"/><ellipse cx="376.3" cy="259.1" rx="6.4" ry="3.1" opacity="0.39"/><ellipse cx="374.9" cy="301.3" rx="6.4" ry="5.3" opacity="0.53"/><ellipse cx="338.8" cy="312.3" rx="6.0" ry="4.3" opacity="0.48"/><ellipse cx="470.7" cy="308.7" rx="4.9" ry="4.7" opacity="0.35"/><ellipse cx="508.9" cy="347.5" rx="4.0" ry="3.7" opacity="0.39"/><ellipse cx="505.6" cy="271.0" rx="3.5" ry="3.3" opacity="0.25"/><ellipse cx="451.7" cy="264.9" rx="5.7" ry="4.3" opacity="0.38"/><ellipse cx="443.9" cy="326.0" rx="5.6" ry="2.5" opacity="0.38"/><ellipse cx="517.1" cy="278.9" rx="6.8" ry="3.2" opacity="0.32"/></g>
</g></g>
<g fill="none" stroke="#c2dde6" stroke-linecap="round" stroke-linejoin="round" opacity=".6">
<polyline stroke-width="1.5" points="615,118 640,113 660,110 685,100 700,94 720,90 740,96 760,90 780,78 797,61"/>
<polyline stroke-width="1.1" points="615,118 600,104 585,90 570,78 552,68 535,62"/>
<polyline stroke-width="1.1" points="615,118 590,123 560,121 530,113 500,108 470,106"/>
<polyline stroke-width="1" points="706,113 700,130 694,148"/>
<polyline stroke-width="1" points="797,150 800,170 806,190 822,200"/>
<polyline stroke-width="1" points="850,74 832,84 812,92 790,96"/>
</g>
<g fill="#aad3df">
<ellipse cx="420.5" cy="388" rx="11" ry="3.6" transform="rotate(42 420.5 388)"/>
<ellipse cx="797" cy="152" rx="2.2" ry="6" transform="rotate(-10 797 152)"/>
<ellipse cx="989" cy="246" rx="9" ry="2" transform="rotate(-28 989 246)"/>
</g>
<g fill="none" stroke="#b7a3c4" stroke-width=".9" opacity=".9">
<circle cx="1151.5" cy="136.5" r="4.3"/><circle cx="1180" cy="136.5" r="4.5"/>
<circle cx="1243" cy="487" r="3.8"/><circle cx="1252.5" cy="487" r="3.8"/>
<ellipse cx="205.5" cy="617" rx="7" ry="5"/>
</g>

<g fill="none" stroke="#b99ec0" stroke-width="1.1" stroke-linejoin="round" opacity=".9"><polyline points="360.8,161.0 346.2,175.7 343.6,197.6 331.5,212.3 338.8,223.3 362.6,241.6 366.3,259.9 398.5,261.0 399.3,280.8 432.2,287.4 461.5,276.4 494.5,259.9 505.5,258.8 507.3,276.4 512.8,291.0 527.5,309.4 556.8,324.0 578.8,334.3"/><polyline points="399.3,280.8 428.6,313.0 435.9,348.2"/><polyline points="420.7,318.0 426.2,340.1 420.7,358.5 435.4,373.2 429.9,391.6 435.4,410.0 424.4,426.5 398.6,438.7"/><polyline points="424.4,426.5 439.1,465.1 442.8,494.6 453.8,524.0 464.8,538.7"/><polyline points="464.8,538.7 486.9,516.6 512.7,524.0 523.7,535.0 534.7,518.5 558.6,520.3"/><polyline points="464.8,538.7 457.5,553.4 464.8,575.5 450.1,597.6 442.8,612.3 446.5,634.3 428.1,656.4 420.7,670.0"/><polyline points="558.6,520.3 567.8,494.6 578.9,468.8 634.0,459.6 652.4,474.3"/><polyline points="545.8,318.0 567.8,329.0 582.5,338.2 604.6,336.4 608.3,369.5 612.0,391.6 645.1,395.2 652.4,413.6 663.5,424.7 665.3,439.4 656.1,450.4 652.4,474.3"/><polyline points="652.4,474.3 658.0,494.6 656.1,524.0 681.9,527.7 703.9,527.7 707.6,557.1 726.0,568.1 729.7,597.6 729.7,612.3"/><polyline points="558.6,520.3 575.2,546.1 597.3,560.8 623.0,575.5 648.8,590.2 663.5,593.9 656.1,612.3 667.2,630.7 689.2,641.7 711.3,638.0 729.7,623.3 729.7,612.3"/><polyline points="729.7,623.3 748.1,634.3 773.8,639.9 755.4,654.6 733.4,670.0"/><polyline points="531.2,0.0 534.5,8.4 544.6,5.0 546.2,11.7 534.5,16.8 517.8,31.8 501.0,41.9 484.3,41.9 469.2,31.8 462.5,13.4 445.7,21.8 413.9,21.8 413.9,35.2 425.6,36.0 426.5,44.4 410.6,46.1 408.9,62.0 417.3,70.4 422.3,80.4 411.4,145.7 393.8,149.1 372.0,154.1 363.7,156.1"/><polyline points="303.4,57.0 321.8,70.4 330.2,80.4 343.6,93.8 348.6,105.5 367.0,107.2 393.8,105.5 407.2,113.9 397.2,134.0 407.2,144.1 411.4,145.7"/></g>
<g fill="none" stroke="#bfaecb" stroke-width=".7" stroke-linejoin="round" opacity=".75"><polyline points="584.3,238.8 646.8,238.8 654.1,210.4 668.5,241.7 683.0,251.3 815.4,259.8"/><polyline points="815.4,259.8 810.5,280.2 805.7,304.3 813.0,313.9 805.7,333.2 803.3,352.4 788.9,371.7 784.1,391.0 764.8,400.6 755.2,415.0 740.7,432.1"/><polyline points="815.4,259.8 822.6,241.7 837.0,222.4 841.8,208.0"/><polyline points="584.3,238.8 581.8,256.1 589.1,275.4 615.6,287.4 618.0,311.5 605.9,328.4 596.3,335.6"/><polyline points="901.7,75.0 896.1,95.7 888.5,114.5 879.1,133.4 865.9,148.4 854.6,163.5 850.9,171.0"/><polyline points="988.4,120.2 973.3,131.5 963.9,146.5 962.0,163.5 965.8,189.9 950.7,201.2 931.9,208.7 913.0,218.1 907.4,234.0"/><polyline points="995.9,120.2 999.7,137.1 999.7,156.0 1005.4,171.0 1011.0,189.9 1012.9,206.8 1022.3,208.7 1035.5,208.7 1054.3,218.1"/><polyline points="850.9,171.0 869.7,167.3 871.6,182.3 867.8,201.2 875.4,218.1 882.9,234.0"/><polyline points="850.9,171.0 856.5,178.6 852.8,193.6 837.7,208.7 833.9,234.0"/><polyline points="896.2,318.0 896.2,333.7 900.9,349.4 902.4,369.8 889.9,365.1 883.6,369.8 883.6,385.5 874.2,391.8 874.2,405.9 877.3,415.3 871.1,427.9 872.6,440.4"/><polyline points="902.4,369.8 921.3,358.8 937.0,352.5 944.8,355.7 952.7,362.0 968.4,365.1 984.1,371.4 996.6,380.8 1012.3,383.9 1024.9,391.8 1021.8,405.9 1012.3,415.3 1015.5,427.9 1031.2,438.9"/><polyline points="813.8,322.7 834.9,324.3 849.1,330.6 867.9,329.0 889.9,324.3 896.2,318.0"/><polyline points="807.5,322.7 800.4,338.4 789.4,365.1 783.1,383.9 780.0,387.1"/><polyline points="1012.3,415.3 1002.9,437.3 999.8,451.4 1006.1,464.6"/><polyline points="872.6,440.4 858.5,442.0 842.8,440.4 819.2,448.3 808.3,459.3 800.4,464.6"/><polyline points="842.8,479.7 874.2,492.3 889.9,504.8 889.9,529.9 896.2,537.8 910.3,533.1 921.3,529.9 937.0,526.8 952.7,523.7 976.2,515.8 987.2,503.2 984.1,492.3 990.4,479.7 999.8,468.7"/><polyline points="780.0,539.4 795.7,537.8 811.4,540.9 827.1,548.8 831.8,564.5 839.7,577.0 850.6,583.3 853.8,589.6"/></g>
<g fill="none" stroke="#a58fb5" stroke-width=".8" stroke-linejoin="round" opacity=".8"><polyline points="109.9,132.1 113.6,162.8 124.5,206.8 146.5,247.1 172.2,276.4 199.6,348.2"/><polyline points="200.0,351.1 222.1,380.5 255.2,413.6 292.0,443.1 325.1,465.1 332.4,479.8 372.9,443.1 400.5,441.2"/><polyline points="808.1,0.0 832.2,28.9 868.3,63.8 904.4,74.6 928.5,81.8 952.6,96.3 988.7,110.7 1024.8,120.4 1048.9,125.2 1073.0,142.0 1097.0,154.1 1125.9,166.1 1137.9,183.0 1142.8,204.6 1141.6,224.1"/></g>
<g font-family="Liberation Sans, sans-serif" text-anchor="middle" stroke-linejoin="round" style="paint-order:stroke">
<text x="342.5" y="131.3" font-size="10.15" fill="#484848" stroke="#fff" stroke-opacity=".75" stroke-width="1.6">Iquitos</text>
<text x="192.0" y="174.6" font-size="10.15" fill="#484848" stroke="#fff" stroke-opacity=".75" stroke-width="1.6">Piura</text>
<text x="208.0" y="193.6" font-size="10.15" fill="#484848" stroke="#fff" stroke-opacity=".75" stroke-width="1.6">Chiclayo</text>
<text x="225.0" y="221.6" font-size="10.15" fill="#484848" stroke="#fff" stroke-opacity=".75" stroke-width="1.6">Trujillo</text>
<text x="317.0" y="226.6" font-size="10.15" fill="#484848" stroke="#fff" stroke-opacity=".75" stroke-width="1.6">Pucallpa</text>
<text x="281.0" y="271.0" font-size="11.4" letter-spacing=".3" fill="#8f7a9d" stroke="#fff" stroke-opacity=".6" stroke-width="1.4">Perú</text>
<text x="303.0" y="303.6" font-size="10.15" fill="#484848" stroke="#fff" stroke-opacity=".75" stroke-width="1.6">Huancayo</text>
<text x="266.0" y="318.6" font-size="10.15" fill="#484848" stroke="#fff" stroke-opacity=".75" stroke-width="1.6">Lima</text>
<text x="322.0" y="326.1" font-size="10.15" fill="#484848" stroke="#fff" stroke-opacity=".75" stroke-width="1.6">Ayacucho</text>
<text x="292.0" y="345.2" font-size="10.15" fill="#484848" stroke="#fff" stroke-opacity=".75" stroke-width="1.6">Ica</text>
<text x="615.0" y="118.6" font-size="10.15" fill="#484848" stroke="#fff" stroke-opacity=".75" stroke-width="1.6">Manaus</text>
<text x="535.0" y="234.2" font-size="10.15" fill="#484848" stroke="#fff" stroke-opacity=".75" stroke-width="1.6">Porto Velho</text>
<text x="454.0" y="259.6" font-size="10.15" fill="#484848" stroke="#fff" stroke-opacity=".75" stroke-width="1.6">Rio Branco</text>
<text x="590.0" y="23.7" font-size="8.6" font-style="italic" fill="#9274ad" stroke="#fff" stroke-opacity=".6" stroke-width="1.2">Roraima</text>
<text x="383.0" y="103.6" font-size="8.6" font-style="italic" fill="#9274ad" stroke="#fff" stroke-opacity=".6" stroke-width="1.2">Amazonas</text>
<text x="543.0" y="139.8" font-size="8.6" font-style="italic" fill="#9274ad" stroke="#fff" stroke-opacity=".6" stroke-width="1.2">Amazonas</text>
<text x="318.7" y="150.8" font-size="8.6" font-style="italic" fill="#9274ad" stroke="#fff" stroke-opacity=".6" stroke-width="1.2">Loreto</text>
<text x="329.7" y="253.7" font-size="8.6" font-style="italic" fill="#9274ad" stroke="#fff" stroke-opacity=".6" stroke-width="1.2">Ucayali</text>
<text x="395.0" y="249.0" font-size="8.6" font-style="italic" fill="#9274ad" stroke="#fff" stroke-opacity=".6" stroke-width="1.2">Acre</text>
<text x="544.7" y="284.0" font-size="8.6" font-style="italic" fill="#9274ad" stroke="#fff" stroke-opacity=".6" stroke-width="1.2">Rondônia</text>
<text x="393.8" y="295.0" font-size="8.6" font-style="italic" fill="#9274ad" stroke="#fff" stroke-opacity=".6" stroke-width="1.2">Madre de</text>
<text x="393.8" y="306.0" font-size="8.6" font-style="italic" fill="#9274ad" stroke="#fff" stroke-opacity=".6" stroke-width="1.2">Dios</text>
<text x="371.8" y="336.5" font-size="8.6" font-style="italic" fill="#9274ad" stroke="#fff" stroke-opacity=".6" stroke-width="1.2">Cusco</text>
<text x="519.4" y="338.0" font-size="8.6" font-style="italic" fill="#9274ad" stroke="#fff" stroke-opacity=".6" stroke-width="1.2">Beni</text>
<text x="709.0" y="324.4" font-size="8.6" font-style="italic" fill="#9274ad" stroke="#fff" stroke-opacity=".6" stroke-width="1.2">Mato Grosso</text>
<text x="319.0" y="38.7" font-size="8.6" font-style="italic" fill="#9274ad" stroke="#fff" stroke-opacity=".6" stroke-width="1.2">Caquetá</text>
<text x="779.5" y="26.6" font-size="8.6" font-style="italic" fill="#9274ad" stroke="#fff" stroke-opacity=".6" stroke-width="1.2">Amapá</text>
<text x="798.0" y="54.0" font-size="10.15" fill="#484848" stroke="#fff" stroke-opacity=".75" stroke-width="1.6">Macapá</text>
<text x="850.0" y="84.0" font-size="10.15" fill="#484848" stroke="#fff" stroke-opacity=".75" stroke-width="1.6">Belém</text>
<text x="778.8" y="136.5" font-size="8.6" font-style="italic" fill="#9274ad" stroke="#fff" stroke-opacity=".6" stroke-width="1.2">Pará</text>
<text x="936.0" y="121.0" font-size="10.15" fill="#484848" stroke="#fff" stroke-opacity=".75" stroke-width="1.6">São Luís</text>
<text x="966.7" y="159.1" font-size="10.15" fill="#484848" stroke="#fff" stroke-opacity=".75" stroke-width="1.6">Teresina</text>
<text x="916.8" y="174.6" font-size="8.6" font-style="italic" fill="#9274ad" stroke="#fff" stroke-opacity=".6" stroke-width="1.2">Maranhão</text>
<text x="1054.6" y="145.2" font-size="10.15" fill="#484848" stroke="#fff" stroke-opacity=".75" stroke-width="1.6">Fortaleza</text>
<text x="1036.0" y="168.8" font-size="8.6" font-style="italic" fill="#9274ad" stroke="#fff" stroke-opacity=".6" stroke-width="1.2">Ceará</text>
<text x="988.0" y="200.6" font-size="8.6" font-style="italic" fill="#9274ad" stroke="#fff" stroke-opacity=".6" stroke-width="1.2">Piauí</text>
<text x="1126.7" y="173.4" font-size="10.15" fill="#484848" stroke="#fff" stroke-opacity=".75" stroke-width="1.6">Natal</text>
<text x="1129.0" y="200.6" font-size="10.15" fill="#484848" stroke="#fff" stroke-opacity=".75" stroke-width="1.6">João Pessoa</text>
<text x="1134.0" y="220.3" font-size="10.15" fill="#484848" stroke="#fff" stroke-opacity=".75" stroke-width="1.6">Recife</text>
<text x="1068.0" y="233.0" font-size="8.6" font-style="italic" fill="#9274ad" stroke="#fff" stroke-opacity=".6" stroke-width="1.2">Pernambuco</text>
<text x="1112.0" y="253.2" font-size="10.15" fill="#484848" stroke="#fff" stroke-opacity=".75" stroke-width="1.6">Maceió</text>
<text x="852.0" y="253.0" font-size="8.6" font-style="italic" fill="#9274ad" stroke="#fff" stroke-opacity=".6" stroke-width="1.2">Tocantins</text>
<text x="853.8" y="278.2" font-size="10.15" fill="#484848" stroke="#fff" stroke-opacity=".75" stroke-width="1.6">Palmas</text>
<text x="1087.5" y="295.6" font-size="10.15" fill="#484848" stroke="#fff" stroke-opacity=".75" stroke-width="1.6">Aracaju</text>
<text x="1088.0" y="314.6" font-size="10.15" fill="#484848" stroke="#fff" stroke-opacity=".75" stroke-width="1.6">Feira de Santana</text>
<text x="1056.4" y="337.1" font-size="10.15" fill="#484848" stroke="#fff" stroke-opacity=".75" stroke-width="1.6">Salvador</text>
<text x="974.0" y="340.6" font-size="8.6" font-style="italic" fill="#9274ad" stroke="#fff" stroke-opacity=".6" stroke-width="1.2">Bahia</text>
<text x="378.0" y="395.1" font-size="10.15" fill="#484848" stroke="#fff" stroke-opacity=".75" stroke-width="1.6">Arequipa</text>
<text x="407.7" y="375.0" font-size="8.6" font-style="italic" fill="#9274ad" stroke="#fff" stroke-opacity=".6" stroke-width="1.2">Puno</text>
<text x="442.0" y="371.0" font-size="8.6" font-style="italic" fill="#9274ad" stroke="#fff" stroke-opacity=".6" stroke-width="1.2">La Paz</text>
<text x="447.6" y="397.3" font-size="10.15" fill="#484848" stroke="#fff" stroke-opacity=".75" stroke-width="1.6">La Paz</text>
<text x="530.0" y="399.9" font-size="11.4" letter-spacing=".3" fill="#8f7a9d" stroke="#fff" stroke-opacity=".6" stroke-width="1.4">Bolivia</text>
<text x="488.3" y="416.3" font-size="10.15" fill="#484848" stroke="#fff" stroke-opacity=".75" stroke-width="1.6">Cochabamba</text>
<text x="583.0" y="415.0" font-size="8.6" font-style="italic" fill="#9274ad" stroke="#fff" stroke-opacity=".6" stroke-width="1.2">Santa Cruz</text>
<text x="404.0" y="443.6" font-size="10.15" fill="#484848" stroke="#fff" stroke-opacity=".75" stroke-width="1.6">Tacna</text>
<text x="468.5" y="443.4" font-size="10.15" fill="#484848" stroke="#fff" stroke-opacity=".75" stroke-width="1.6">Oruro</text>
<text x="549.5" y="439.6" font-size="10.15" fill="#484848" stroke="#fff" stroke-opacity=".75" stroke-width="1.6">Santa Cruz</text>
<text x="549.5" y="451.6" font-size="10.15" fill="#484848" stroke="#fff" stroke-opacity=".75" stroke-width="1.6">de la Sierra</text>
<text x="506.6" y="468.6" font-size="10.15" fill="#484848" stroke="#fff" stroke-opacity=".75" stroke-width="1.6">Sucre</text>
<text x="471.4" y="487.5" font-size="8.6" font-style="italic" fill="#9274ad" stroke="#fff" stroke-opacity=".6" stroke-width="1.2">Potosí</text>
<text x="638.0" y="498.5" font-size="8.6" font-style="italic" fill="#9274ad" stroke="#fff" stroke-opacity=".6" stroke-width="1.2">Alto Paraguay</text>
<text x="588.6" y="523.4" font-size="8.6" font-style="italic" fill="#9274ad" stroke="#fff" stroke-opacity=".6" stroke-width="1.2">Boquerón</text>
<text x="369.0" y="560.6" font-size="10.15" fill="#484848" stroke="#fff" stroke-opacity=".75" stroke-width="1.6">Antofagasta</text>
<text x="434.8" y="552.0" font-size="8.6" font-style="italic" fill="#9274ad" stroke="#fff" stroke-opacity=".6" stroke-width="1.2">Región de</text>
<text x="434.8" y="563.0" font-size="8.6" font-style="italic" fill="#9274ad" stroke="#fff" stroke-opacity=".6" stroke-width="1.2">Antofagasta</text>
<text x="646.5" y="550.8" font-size="11.4" letter-spacing=".3" fill="#8f7a9d" stroke="#fff" stroke-opacity=".6" stroke-width="1.4">Paraguay /</text>
<text x="646.5" y="563.6" font-size="11.4" letter-spacing=".3" fill="#8f7a9d" stroke="#fff" stroke-opacity=".6" stroke-width="1.4">Paraguái</text>
<text x="476.0" y="573.0" font-size="8.6" font-style="italic" fill="#9274ad" stroke="#fff" stroke-opacity=".6" stroke-width="1.2">Salta</text>
<text x="503.7" y="593.6" font-size="10.15" fill="#484848" stroke="#fff" stroke-opacity=".75" stroke-width="1.6">Salta</text>
<text x="613.6" y="583.5" font-size="8.6" font-style="italic" fill="#9274ad" stroke="#fff" stroke-opacity=".6" stroke-width="1.2">Formosa</text>
<text x="663.0" y="588.5" font-size="10.15" fill="#484848" stroke="#fff" stroke-opacity=".75" stroke-width="1.6">Asunción</text>
<text x="652.0" y="610.6" font-size="10.15" fill="#484848" stroke="#fff" stroke-opacity=".75" stroke-width="1.6">Formosa</text>
<text x="507.3" y="613.4" font-size="10.15" fill="#484848" stroke="#fff" stroke-opacity=".75" stroke-width="1.6">San Miguel</text>
<text x="507.3" y="625.5" font-size="10.15" fill="#484848" stroke="#fff" stroke-opacity=".75" stroke-width="1.6">de Tucumán</text>
<text x="600.7" y="615.0" font-size="8.6" font-style="italic" fill="#9274ad" stroke="#fff" stroke-opacity=".6" stroke-width="1.2">Chaco</text>
<text x="638.5" y="640.1" font-size="10.15" fill="#484848" stroke="#fff" stroke-opacity=".75" stroke-width="1.6">Corrientes</text>
<text x="698.0" y="637.6" font-size="10.15" fill="#484848" stroke="#fff" stroke-opacity=".75" stroke-width="1.6">Posadas</text>
<text x="410.0" y="641.0" font-size="8.6" font-style="italic" fill="#9274ad" stroke="#fff" stroke-opacity=".6" stroke-width="1.2">Región de</text>
<text x="410.0" y="651.6" font-size="8.6" font-style="italic" fill="#9274ad" stroke="#fff" stroke-opacity=".6" stroke-width="1.2">Atacama</text>
<text x="460.8" y="652.0" font-size="8.6" font-style="italic" fill="#9274ad" stroke="#fff" stroke-opacity=".6" stroke-width="1.2">Catamarca</text>
<text x="544.0" y="655.0" font-size="8.6" font-style="italic" fill="#9274ad" stroke="#fff" stroke-opacity=".6" stroke-width="1.2">Santiago</text>
<text x="544.0" y="666.0" font-size="8.6" font-style="italic" fill="#9274ad" stroke="#fff" stroke-opacity=".6" stroke-width="1.2">del Estero</text>
<text x="694.5" y="377.6" font-size="10.15" fill="#484848" stroke="#fff" stroke-opacity=".75" stroke-width="1.6">Cuiabá</text>
<text x="863.0" y="379.6" font-size="10.15" fill="#484848" stroke="#fff" stroke-opacity=".75" stroke-width="1.6">Brasília</text>
<text x="814.3" y="392.6" font-size="8.6" font-style="italic" fill="#9274ad" stroke="#fff" stroke-opacity=".6" stroke-width="1.2">Goiás</text>
<text x="834.8" y="416.0" font-size="10.15" fill="#484848" stroke="#fff" stroke-opacity=".75" stroke-width="1.6">Goiânia</text>
<text x="944.7" y="417.4" font-size="10.15" fill="#484848" stroke="#fff" stroke-opacity=".75" stroke-width="1.6">Montes Claros</text>
<text x="855.0" y="449.3" font-size="10.15" fill="#484848" stroke="#fff" stroke-opacity=".75" stroke-width="1.6">Uberlândia</text>
<text x="918.7" y="449.8" font-size="8.6" font-style="italic" fill="#9274ad" stroke="#fff" stroke-opacity=".6" stroke-width="1.2">Minas Gerais</text>
<text x="1023.0" y="459.6" font-size="10.15" fill="#484848" stroke="#fff" stroke-opacity=".75" stroke-width="1.6">Linhares</text>
<text x="1017.0" y="480.1" font-size="10.15" fill="#484848" stroke="#fff" stroke-opacity=".75" stroke-width="1.6">Vitória</text>
<text x="943.6" y="485.6" font-size="10.15" fill="#484848" stroke="#fff" stroke-opacity=".75" stroke-width="1.6">Belo Horizonte</text>
<text x="864.0" y="486.3" font-size="10.15" fill="#484848" stroke="#fff" stroke-opacity=".75" stroke-width="1.6">Ribeirão</text>
<text x="864.0" y="498.4" font-size="10.15" fill="#484848" stroke="#fff" stroke-opacity=".75" stroke-width="1.6">Preto</text>
<text x="806.0" y="491.6" font-size="10.15" fill="#484848" stroke="#fff" stroke-opacity=".75" stroke-width="1.6">São José</text>
<text x="800.7" y="503.6" font-size="10.15" fill="#484848" stroke="#fff" stroke-opacity=".75" stroke-width="1.6">do Rio Preto</text>
<text x="723.8" y="488.6" font-size="8.6" font-style="italic" fill="#9274ad" stroke="#fff" stroke-opacity=".6" stroke-width="1.2">Mato Grosso</text>
<text x="718.0" y="499.6" font-size="8.6" font-style="italic" fill="#9274ad" stroke="#fff" stroke-opacity=".6" stroke-width="1.2">do Sul</text>
<text x="971.0" y="529.0" font-size="8.6" font-style="italic" fill="#9274ad" stroke="#fff" stroke-opacity=".6" stroke-width="1.2">Rio de Janeiro</text>
<text x="842.0" y="538.4" font-size="8.6" font-style="italic" fill="#9274ad" stroke="#fff" stroke-opacity=".6" stroke-width="1.2">São Paulo</text>
<text x="958.0" y="553.0" font-size="10.15" fill="#484848" stroke="#fff" stroke-opacity=".75" stroke-width="1.6">Rio de Janeiro</text>
<text x="796.0" y="560.6" font-size="10.15" fill="#484848" stroke="#fff" stroke-opacity=".75" stroke-width="1.6">Londrina</text>
<text x="888.0" y="565.6" font-size="10.15" fill="#484848" stroke="#fff" stroke-opacity=".75" stroke-width="1.6">São Paulo</text>
<text x="782.4" y="582.0" font-size="8.6" font-style="italic" fill="#9274ad" stroke="#fff" stroke-opacity=".6" stroke-width="1.2">Paraná</text>
<text x="834.4" y="607.9" font-size="10.15" fill="#484848" stroke="#fff" stroke-opacity=".75" stroke-width="1.6">Curitiba</text>
<text x="725.0" y="610.1" font-size="10.15" fill="#484848" stroke="#fff" stroke-opacity=".75" stroke-width="1.6">Ciudad del</text>
<text x="725.0" y="622.6" font-size="10.15" fill="#484848" stroke="#fff" stroke-opacity=".75" stroke-width="1.6">Este</text>
<text x="842.9" y="629.1" font-size="10.15" fill="#484848" stroke="#fff" stroke-opacity=".75" stroke-width="1.6">Joinville</text>
<text x="824.5" y="652.4" font-size="8.6" font-style="italic" fill="#9274ad" stroke="#fff" stroke-opacity=".6" stroke-width="1.2">Santa Catarina</text>
<text x="795.0" y="666.6" font-size="10.15" fill="#484848" stroke="#fff" stroke-opacity=".75" stroke-width="1.6">Caxias do</text>
</g>
<g fill="#b30000" stroke="#7a0000" stroke-width=".7">
<circle cx="936.5" cy="111.9" r="9.1"/><circle cx="442.8" cy="265.2" r="9.1"/><circle cx="526.4" cy="246.0" r="9.1"/><circle cx="831.8" cy="493.0" r="9.1"/><circle cx="764.1" cy="454.1" r="9.1"/>
</g>
<g fill="#ff2210" stroke="#b32a1a" stroke-width=".7">
<circle cx="554.1" cy="262.8" r="7.6"/><circle cx="589.0" cy="330.9" r="7.6"/><circle cx="724.6" cy="259.3" r="7.6"/><circle cx="706.5" cy="299.5" r="7.6"/><circle cx="625.7" cy="379.6" r="7.6"/><circle cx="1128.4" cy="223.1" r="7.6"/><circle cx="862.9" cy="518.2" r="7.6"/><circle cx="966.8" cy="540.5" r="7.6"/><circle cx="774.2" cy="485.8" r="7.6"/>
</g>
<g fill="#ff5f10" stroke="#a8521a" stroke-width=".7">
<circle cx="353.4" cy="221.0" r="6.0"/><circle cx="544.4" cy="256.3" r="6.0"/><circle cx="587.3" cy="291.0" r="6.0"/><circle cx="705.1" cy="287.0" r="6.0"/><circle cx="658.9" cy="401.3" r="6.0"/><circle cx="1036.7" cy="210.5" r="6.0"/><circle cx="1044.2" cy="219.3" r="6.0"/><circle cx="1124.6" cy="231.2" r="6.0"/><circle cx="1122.1" cy="236.9" r="6.0"/><circle cx="1054.3" cy="322.9" r="6.0"/><circle cx="1054.8" cy="135.4" r="6.0"/><circle cx="1121.8" cy="174.6" r="6.0"/><circle cx="1062.0" cy="190.9" r="6.0"/><circle cx="681.7" cy="448.3" r="6.0"/><circle cx="684.4" cy="478.8" r="6.0"/><circle cx="733.1" cy="523.5" r="6.0"/>
</g>
<g fill="#ffb012" stroke="#9a7418" stroke-width=".7">
<circle cx="703.5" cy="61.4" r="4.55"/><circle cx="609.1" cy="111.9" r="4.55"/><circle cx="712.1" cy="112.7" r="4.55"/><circle cx="741.5" cy="131.4" r="4.55"/><circle cx="712.9" cy="145.2" r="4.55"/><circle cx="805.3" cy="46.2" r="4.55"/><circle cx="851.0" cy="83.8" r="4.55"/><circle cx="853.9" cy="87.9" r="4.55"/><circle cx="912.9" cy="137.5" r="4.55"/><circle cx="967.8" cy="163.0" r="4.55"/><circle cx="1019.7" cy="136.3" r="4.55"/><circle cx="848.3" cy="208.5" r="4.55"/><circle cx="849.8" cy="222.7" r="4.55"/><circle cx="578.6" cy="273.4" r="4.55"/><circle cx="663.2" cy="285.3" r="4.55"/><circle cx="694.3" cy="339.7" r="4.55"/><circle cx="770.1" cy="333.4" r="4.55"/><circle cx="752.3" cy="370.5" r="4.55"/><circle cx="686.1" cy="386.9" r="4.55"/><circle cx="748.7" cy="388.1" r="4.55"/><circle cx="745.5" cy="398.4" r="4.55"/><circle cx="723.2" cy="402.0" r="4.55"/><circle cx="851.5" cy="237.6" r="4.55"/><circle cx="857.2" cy="268.2" r="4.55"/><circle cx="850.3" cy="274.9" r="4.55"/><circle cx="911.9" cy="322.3" r="4.55"/><circle cx="834.1" cy="404.2" r="4.55"/><circle cx="784.1" cy="430.0" r="4.55"/><circle cx="1046.8" cy="213.0" r="4.55"/><circle cx="1105.8" cy="226.2" r="4.55"/><circle cx="1129.6" cy="217.4" r="4.55"/><circle cx="1112.1" cy="253.8" r="4.55"/><circle cx="990.6" cy="266.0" r="4.55"/><circle cx="1065.2" cy="285.5" r="4.55"/><circle cx="1114.6" cy="213.0" r="4.55"/><circle cx="1102.0" cy="228.7" r="4.55"/><circle cx="1049.2" cy="138.8" r="4.55"/><circle cx="1044.1" cy="148.8" r="4.55"/><circle cx="1112.3" cy="172.3" r="4.55"/><circle cx="1032.2" cy="190.6" r="4.55"/><circle cx="1129.5" cy="204.7" r="4.55"/><circle cx="1127.7" cy="190.3" r="4.55"/><circle cx="1047.3" cy="134.4" r="4.55"/><circle cx="1038.7" cy="365.6" r="4.55"/><circle cx="1039.0" cy="403.2" r="4.55"/><circle cx="834.5" cy="408.3" r="4.55"/><circle cx="1049.2" cy="326.6" r="4.55"/><circle cx="874.2" cy="524.4" r="4.55"/><circle cx="874.2" cy="527.6" r="4.55"/><circle cx="913.4" cy="529.1" r="4.55"/><circle cx="968.4" cy="531.2" r="4.55"/><circle cx="828.7" cy="493.0" r="4.55"/><circle cx="715.9" cy="450.3" r="4.55"/><circle cx="717.7" cy="464.0" r="4.55"/><circle cx="699.0" cy="470.7" r="4.55"/><circle cx="716.6" cy="485.8" r="4.55"/><circle cx="709.5" cy="489.4" r="4.55"/><circle cx="718.1" cy="500.1" r="4.55"/><circle cx="708.7" cy="509.8" r="4.55"/><circle cx="769.5" cy="499.6" r="4.55"/><circle cx="740.1" cy="521.1" r="4.55"/><circle cx="741.7" cy="527.9" r="4.55"/><circle cx="726.5" cy="560.1" r="4.55"/><circle cx="750.2" cy="587.9" r="4.55"/><circle cx="772.8" cy="635.0" r="4.55"/>
</g>
<g fill="#fcec36" stroke="#6f6a22" stroke-width=".7">
<circle cx="573.2" cy="6.5" r="3.1"/><circle cx="603.3" cy="11.3" r="3.1"/><circle cx="584.1" cy="37.8" r="3.1"/><circle cx="593.7" cy="57.3" r="3.1"/><circle cx="672.7" cy="52.5" r="3.1"/><circle cx="416.3" cy="140.6" r="3.1"/><circle cx="529.9" cy="149.3" r="3.1"/><circle cx="464.2" cy="163.2" r="3.1"/><circle cx="405.2" cy="202.2" r="3.1"/><circle cx="339.2" cy="212.3" r="3.1"/><circle cx="563.6" cy="209.4" r="3.1"/><circle cx="604.5" cy="121.6" r="3.1"/><circle cx="691.9" cy="111.7" r="3.1"/><circle cx="744.4" cy="101.6" r="3.1"/><circle cx="725.4" cy="121.1" r="3.1"/><circle cx="727.1" cy="137.9" r="3.1"/><circle cx="696.5" cy="163.5" r="3.1"/><circle cx="739.6" cy="191.4" r="3.1"/><circle cx="791.3" cy="55.8" r="3.1"/><circle cx="863.5" cy="72.9" r="3.1"/><circle cx="891.2" cy="80.6" r="3.1"/><circle cx="865.9" cy="83.1" r="3.1"/><circle cx="857.5" cy="85.9" r="3.1"/><circle cx="842.3" cy="93.4" r="3.1"/><circle cx="830.3" cy="96.3" r="3.1"/><circle cx="851.7" cy="99.7" r="3.1"/><circle cx="829.3" cy="104.2" r="3.1"/><circle cx="830.3" cy="111.0" r="3.1"/><circle cx="838.2" cy="112.9" r="3.1"/><circle cx="855.1" cy="111.9" r="3.1"/><circle cx="861.8" cy="115.6" r="3.1"/><circle cx="868.6" cy="123.7" r="3.1"/><circle cx="925.6" cy="92.2" r="3.1"/><circle cx="914.1" cy="111.2" r="3.1"/><circle cx="919.4" cy="109.5" r="3.1"/><circle cx="922.0" cy="123.3" r="3.1"/><circle cx="937.2" cy="132.2" r="3.1"/><circle cx="950.2" cy="127.3" r="3.1"/><circle cx="920.1" cy="137.2" r="3.1"/><circle cx="939.3" cy="142.0" r="3.1"/><circle cx="930.4" cy="152.6" r="3.1"/><circle cx="988.2" cy="118.7" r="3.1"/><circle cx="1003.6" cy="124.2" r="3.1"/><circle cx="979.3" cy="136.5" r="3.1"/><circle cx="988.0" cy="146.8" r="3.1"/><circle cx="956.7" cy="158.2" r="3.1"/><circle cx="1008.9" cy="137.9" r="3.1"/><circle cx="1014.0" cy="143.7" r="3.1"/><circle cx="1015.9" cy="149.3" r="3.1"/><circle cx="1032.5" cy="127.6" r="3.1"/><circle cx="874.1" cy="156.5" r="3.1"/><circle cx="852.9" cy="163.7" r="3.1"/><circle cx="862.1" cy="166.8" r="3.1"/><circle cx="869.1" cy="167.3" r="3.1"/><circle cx="861.8" cy="170.9" r="3.1"/><circle cx="918.2" cy="171.2" r="3.1"/><circle cx="967.3" cy="177.7" r="3.1"/><circle cx="981.0" cy="192.1" r="3.1"/><circle cx="869.8" cy="186.3" r="3.1"/><circle cx="870.5" cy="191.6" r="3.1"/><circle cx="847.4" cy="200.5" r="3.1"/><circle cx="852.9" cy="202.9" r="3.1"/><circle cx="860.4" cy="200.0" r="3.1"/><circle cx="839.7" cy="216.9" r="3.1"/><circle cx="814.9" cy="223.4" r="3.1"/><circle cx="380.0" cy="227.4" r="3.1"/><circle cx="354.0" cy="232.7" r="3.1"/><circle cx="357.4" cy="245.2" r="3.1"/><circle cx="412.5" cy="251.0" r="3.1"/><circle cx="422.1" cy="259.2" r="3.1"/><circle cx="533.4" cy="265.2" r="3.1"/><circle cx="553.1" cy="271.2" r="3.1"/><circle cx="570.2" cy="276.5" r="3.1"/><circle cx="556.2" cy="286.6" r="3.1"/><circle cx="576.2" cy="288.3" r="3.1"/><circle cx="598.1" cy="292.2" r="3.1"/><circle cx="521.3" cy="291.7" r="3.1"/><circle cx="549.2" cy="301.1" r="3.1"/><circle cx="550.7" cy="313.4" r="3.1"/><circle cx="567.5" cy="315.5" r="3.1"/><circle cx="654.1" cy="259.0" r="3.1"/><circle cx="682.2" cy="255.7" r="3.1"/><circle cx="689.0" cy="265.3" r="3.1"/><circle cx="642.5" cy="272.3" r="3.1"/><circle cx="669.7" cy="292.7" r="3.1"/><circle cx="686.3" cy="289.1" r="3.1"/><circle cx="681.0" cy="300.2" r="3.1"/><circle cx="628.3" cy="295.6" r="3.1"/><circle cx="707.5" cy="277.3" r="3.1"/><circle cx="718.8" cy="283.1" r="3.1"/><circle cx="736.2" cy="282.4" r="3.1"/><circle cx="730.1" cy="264.3" r="3.1"/><circle cx="745.5" cy="266.7" r="3.1"/><circle cx="784.5" cy="272.3" r="3.1"/><circle cx="806.7" cy="250.6" r="3.1"/><circle cx="695.2" cy="306.0" r="3.1"/><circle cx="709.9" cy="314.2" r="3.1"/><circle cx="733.5" cy="304.3" r="3.1"/><circle cx="763.1" cy="308.9" r="3.1"/><circle cx="655.5" cy="314.4" r="3.1"/><circle cx="685.4" cy="317.8" r="3.1"/><circle cx="702.2" cy="319.7" r="3.1"/><circle cx="642.0" cy="329.8" r="3.1"/><circle cx="631.2" cy="339.0" r="3.1"/><circle cx="656.7" cy="340.9" r="3.1"/><circle cx="679.6" cy="338.2" r="3.1"/><circle cx="735.2" cy="340.6" r="3.1"/><circle cx="768.4" cy="347.1" r="3.1"/><circle cx="755.4" cy="355.3" r="3.1"/><circle cx="770.1" cy="360.4" r="3.1"/><circle cx="619.2" cy="354.1" r="3.1"/><circle cx="628.3" cy="361.1" r="3.1"/><circle cx="635.5" cy="368.1" r="3.1"/><circle cx="649.5" cy="356.8" r="3.1"/><circle cx="667.3" cy="365.0" r="3.1"/><circle cx="697.4" cy="364.0" r="3.1"/><circle cx="705.3" cy="371.9" r="3.1"/><circle cx="732.8" cy="371.2" r="3.1"/><circle cx="769.4" cy="376.5" r="3.1"/><circle cx="637.7" cy="375.1" r="3.1"/><circle cx="641.3" cy="380.1" r="3.1"/><circle cx="649.3" cy="381.1" r="3.1"/><circle cx="654.3" cy="382.8" r="3.1"/><circle cx="660.1" cy="376.5" r="3.1"/><circle cx="649.0" cy="386.9" r="3.1"/><circle cx="635.3" cy="389.3" r="3.1"/><circle cx="690.2" cy="380.8" r="3.1"/><circle cx="700.0" cy="381.6" r="3.1"/><circle cx="717.9" cy="376.0" r="3.1"/><circle cx="721.7" cy="383.0" r="3.1"/><circle cx="718.8" cy="393.8" r="3.1"/><circle cx="731.8" cy="400.1" r="3.1"/><circle cx="763.6" cy="388.5" r="3.1"/><circle cx="760.0" cy="396.5" r="3.1"/><circle cx="746.0" cy="409.0" r="3.1"/><circle cx="676.9" cy="407.1" r="3.1"/><circle cx="748.4" cy="421.0" r="3.1"/><circle cx="728.2" cy="425.6" r="3.1"/><circle cx="751.6" cy="429.0" r="3.1"/><circle cx="829.3" cy="226.1" r="3.1"/><circle cx="837.5" cy="225.3" r="3.1"/><circle cx="845.0" cy="231.6" r="3.1"/><circle cx="894.1" cy="227.0" r="3.1"/><circle cx="942.9" cy="238.6" r="3.1"/><circle cx="849.1" cy="258.8" r="3.1"/><circle cx="857.5" cy="255.9" r="3.1"/><circle cx="843.5" cy="268.2" r="3.1"/><circle cx="860.1" cy="287.2" r="3.1"/><circle cx="842.1" cy="298.5" r="3.1"/><circle cx="889.5" cy="313.7" r="3.1"/><circle cx="900.8" cy="310.1" r="3.1"/><circle cx="929.2" cy="305.5" r="3.1"/><circle cx="890.9" cy="326.4" r="3.1"/><circle cx="945.4" cy="347.9" r="3.1"/><circle cx="810.3" cy="371.9" r="3.1"/><circle cx="792.2" cy="381.1" r="3.1"/><circle cx="865.4" cy="374.8" r="3.1"/><circle cx="864.2" cy="385.7" r="3.1"/><circle cx="819.2" cy="395.5" r="3.1"/><circle cx="854.4" cy="392.2" r="3.1"/><circle cx="860.4" cy="400.3" r="3.1"/><circle cx="842.1" cy="402.0" r="3.1"/><circle cx="829.1" cy="403.5" r="3.1"/><circle cx="851.2" cy="407.6" r="3.1"/><circle cx="856.3" cy="412.1" r="3.1"/><circle cx="884.4" cy="398.4" r="3.1"/><circle cx="883.0" cy="415.0" r="3.1"/><circle cx="924.7" cy="387.8" r="3.1"/><circle cx="936.7" cy="386.9" r="3.1"/><circle cx="943.9" cy="403.2" r="3.1"/><circle cx="917.9" cy="417.7" r="3.1"/><circle cx="936.7" cy="421.5" r="3.1"/><circle cx="948.7" cy="417.9" r="3.1"/><circle cx="937.7" cy="412.9" r="3.1"/><circle cx="858.9" cy="422.3" r="3.1"/><circle cx="846.9" cy="426.6" r="3.1"/><circle cx="837.3" cy="427.8" r="3.1"/><circle cx="866.9" cy="430.7" r="3.1"/><circle cx="1014.5" cy="214.0" r="3.1"/><circle cx="1018.7" cy="216.8" r="3.1"/><circle cx="1025.1" cy="215.2" r="3.1"/><circle cx="1029.5" cy="212.1" r="3.1"/><circle cx="1040.5" cy="217.0" r="3.1"/><circle cx="1036.1" cy="219.1" r="3.1"/><circle cx="1044.2" cy="209.9" r="3.1"/><circle cx="1050.5" cy="209.3" r="3.1"/><circle cx="1061.4" cy="210.8" r="3.1"/><circle cx="1087.8" cy="215.8" r="3.1"/><circle cx="1057.8" cy="223.1" r="3.1"/><circle cx="1043.0" cy="225.0" r="3.1"/><circle cx="1071.9" cy="226.0" r="3.1"/><circle cx="1078.8" cy="226.8" r="3.1"/><circle cx="1099.5" cy="220.2" r="3.1"/><circle cx="1091.1" cy="230.6" r="3.1"/><circle cx="1100.5" cy="232.2" r="3.1"/><circle cx="1108.3" cy="236.3" r="3.1"/><circle cx="1109.5" cy="231.2" r="3.1"/><circle cx="1115.2" cy="226.8" r="3.1"/><circle cx="1114.6" cy="231.2" r="3.1"/><circle cx="1114.6" cy="217.8" r="3.1"/><circle cx="1117.5" cy="212.8" r="3.1"/><circle cx="1118.3" cy="221.2" r="3.1"/><circle cx="1121.5" cy="239.4" r="3.1"/><circle cx="1114.9" cy="245.3" r="3.1"/><circle cx="1032.7" cy="231.9" r="3.1"/><circle cx="1038.2" cy="230.6" r="3.1"/><circle cx="1011.6" cy="232.2" r="3.1"/><circle cx="1003.5" cy="235.1" r="3.1"/><circle cx="1012.6" cy="243.5" r="3.1"/><circle cx="1096.1" cy="241.5" r="3.1"/><circle cx="1098.9" cy="240.0" r="3.1"/><circle cx="1092.3" cy="247.6" r="3.1"/><circle cx="1093.8" cy="252.0" r="3.1"/><circle cx="1081.5" cy="250.3" r="3.1"/><circle cx="1075.6" cy="254.2" r="3.1"/><circle cx="1083.8" cy="257.9" r="3.1"/><circle cx="1059.2" cy="254.3" r="3.1"/><circle cx="1018.7" cy="254.8" r="3.1"/><circle cx="978.4" cy="255.6" r="3.1"/><circle cx="1093.2" cy="258.6" r="3.1"/><circle cx="1094.5" cy="263.3" r="3.1"/><circle cx="1098.6" cy="263.0" r="3.1"/><circle cx="1102.0" cy="265.8" r="3.1"/><circle cx="1102.4" cy="257.0" r="3.1"/><circle cx="1106.2" cy="255.7" r="3.1"/><circle cx="1090.1" cy="273.1" r="3.1"/><circle cx="1093.2" cy="270.5" r="3.1"/><circle cx="1076.9" cy="278.0" r="3.1"/><circle cx="1086.3" cy="281.5" r="3.1"/><circle cx="1083.5" cy="284.6" r="3.1"/><circle cx="1022.0" cy="273.9" r="3.1"/><circle cx="1017.4" cy="279.0" r="3.1"/><circle cx="1035.2" cy="279.0" r="3.1"/><circle cx="1073.5" cy="287.1" r="3.1"/><circle cx="1070.2" cy="290.5" r="3.1"/><circle cx="1071.2" cy="294.7" r="3.1"/><circle cx="1067.1" cy="296.3" r="3.1"/><circle cx="1043.4" cy="289.3" r="3.1"/><circle cx="1035.4" cy="292.4" r="3.1"/><circle cx="1021.8" cy="293.0" r="3.1"/><circle cx="1011.6" cy="293.5" r="3.1"/><circle cx="1000.4" cy="294.4" r="3.1"/><circle cx="992.1" cy="289.4" r="3.1"/><circle cx="1053.3" cy="296.7" r="3.1"/><circle cx="1036.3" cy="301.6" r="3.1"/><circle cx="1018.9" cy="308.5" r="3.1"/><circle cx="1011.3" cy="310.7" r="3.1"/><circle cx="991.9" cy="311.0" r="3.1"/><circle cx="985.7" cy="314.4" r="3.1"/><circle cx="961.6" cy="320.0" r="3.1"/><circle cx="1056.8" cy="307.8" r="3.1"/><circle cx="1044.2" cy="309.7" r="3.1"/><circle cx="1041.7" cy="313.5" r="3.1"/><circle cx="1043.2" cy="317.9" r="3.1"/><circle cx="1056.8" cy="312.9" r="3.1"/><circle cx="1062.4" cy="315.6" r="3.1"/><circle cx="1061.2" cy="319.8" r="3.1"/><circle cx="1029.8" cy="320.4" r="3.1"/><circle cx="1033.2" cy="320.8" r="3.1"/><circle cx="1039.8" cy="321.0" r="3.1"/><circle cx="1045.4" cy="146.7" r="3.1"/><circle cx="1052.3" cy="146.3" r="3.1"/><circle cx="1059.2" cy="144.8" r="3.1"/><circle cx="1051.1" cy="150.1" r="3.1"/><circle cx="1067.8" cy="149.4" r="3.1"/><circle cx="1068.6" cy="154.7" r="3.1"/><circle cx="1072.4" cy="153.8" r="3.1"/><circle cx="1077.4" cy="155.1" r="3.1"/><circle cx="1046.0" cy="159.5" r="3.1"/><circle cx="1056.5" cy="160.7" r="3.1"/><circle cx="1064.2" cy="163.6" r="3.1"/><circle cx="1068.0" cy="162.6" r="3.1"/><circle cx="1046.7" cy="166.0" r="3.1"/><circle cx="1028.2" cy="162.4" r="3.1"/><circle cx="1017.4" cy="170.2" r="3.1"/><circle cx="1079.1" cy="164.3" r="3.1"/><circle cx="1084.7" cy="160.5" r="3.1"/><circle cx="1091.6" cy="167.7" r="3.1"/><circle cx="1085.6" cy="171.4" r="3.1"/><circle cx="1093.8" cy="170.2" r="3.1"/><circle cx="1099.4" cy="170.2" r="3.1"/><circle cx="1098.1" cy="164.3" r="3.1"/><circle cx="1101.9" cy="164.5" r="3.1"/><circle cx="1105.7" cy="163.3" r="3.1"/><circle cx="1108.2" cy="166.4" r="3.1"/><circle cx="1113.8" cy="166.4" r="3.1"/><circle cx="1118.9" cy="168.3" r="3.1"/><circle cx="1103.2" cy="174.6" r="3.1"/><circle cx="1108.2" cy="178.3" r="3.1"/><circle cx="1112.0" cy="183.4" r="3.1"/><circle cx="1103.2" cy="180.8" r="3.1"/><circle cx="1105.7" cy="185.9" r="3.1"/><circle cx="1101.9" cy="189.0" r="3.1"/><circle cx="1096.9" cy="185.9" r="3.1"/><circle cx="1090.0" cy="184.6" r="3.1"/><circle cx="1085.6" cy="182.7" r="3.1"/><circle cx="1088.1" cy="177.1" r="3.1"/><circle cx="1093.1" cy="179.0" r="3.1"/><circle cx="1082.4" cy="179.0" r="3.1"/><circle cx="1075.9" cy="181.1" r="3.1"/><circle cx="1065.9" cy="176.2" r="3.1"/><circle cx="1068.6" cy="180.8" r="3.1"/><circle cx="1061.5" cy="183.7" r="3.1"/><circle cx="1055.4" cy="181.7" r="3.1"/><circle cx="1054.6" cy="173.1" r="3.1"/><circle cx="1029.7" cy="176.7" r="3.1"/><circle cx="1035.7" cy="178.1" r="3.1"/><circle cx="1034.7" cy="183.7" r="3.1"/><circle cx="1042.3" cy="184.4" r="3.1"/><circle cx="1021.2" cy="185.9" r="3.1"/><circle cx="1026.3" cy="186.5" r="3.1"/><circle cx="1039.1" cy="188.4" r="3.1"/><circle cx="1049.2" cy="189.0" r="3.1"/><circle cx="1042.9" cy="192.8" r="3.1"/><circle cx="1058.8" cy="189.6" r="3.1"/><circle cx="1064.2" cy="187.7" r="3.1"/><circle cx="1068.3" cy="197.2" r="3.1"/><circle cx="1078.4" cy="193.4" r="3.1"/><circle cx="1082.4" cy="194.7" r="3.1"/><circle cx="1085.0" cy="190.9" r="3.1"/><circle cx="1089.4" cy="193.4" r="3.1"/><circle cx="1093.8" cy="195.9" r="3.1"/><circle cx="1095.0" cy="192.4" r="3.1"/><circle cx="1087.5" cy="200.3" r="3.1"/><circle cx="1089.4" cy="206.2" r="3.1"/><circle cx="1106.9" cy="207.2" r="3.1"/><circle cx="1116.4" cy="188.4" r="3.1"/><circle cx="1113.8" cy="190.9" r="3.1"/><circle cx="1120.1" cy="191.5" r="3.1"/><circle cx="1123.9" cy="184.0" r="3.1"/><circle cx="1123.3" cy="189.6" r="3.1"/><circle cx="1123.9" cy="195.9" r="3.1"/><circle cx="1127.0" cy="197.8" r="3.1"/><circle cx="1122.0" cy="211.6" r="3.1"/><circle cx="1054.2" cy="200.1" r="3.1"/><circle cx="1049.2" cy="204.5" r="3.1"/><circle cx="1045.4" cy="197.2" r="3.1"/><circle cx="1038.5" cy="197.5" r="3.1"/><circle cx="1039.1" cy="200.9" r="3.1"/><circle cx="1031.2" cy="203.4" r="3.1"/><circle cx="1029.1" cy="206.6" r="3.1"/><circle cx="1039.8" cy="327.1" r="3.1"/><circle cx="1037.5" cy="330.6" r="3.1"/><circle cx="1034.3" cy="333.2" r="3.1"/><circle cx="1040.6" cy="333.7" r="3.1"/><circle cx="1001.8" cy="340.3" r="3.1"/><circle cx="1024.9" cy="338.1" r="3.1"/><circle cx="1021.3" cy="345.2" r="3.1"/><circle cx="1035.1" cy="343.1" r="3.1"/><circle cx="1041.7" cy="342.3" r="3.1"/><circle cx="964.1" cy="344.4" r="3.1"/><circle cx="966.5" cy="351.8" r="3.1"/><circle cx="999.8" cy="350.7" r="3.1"/><circle cx="1013.1" cy="348.6" r="3.1"/><circle cx="1027.7" cy="352.9" r="3.1"/><circle cx="1032.0" cy="357.2" r="3.1"/><circle cx="1032.7" cy="360.7" r="3.1"/><circle cx="1022.9" cy="360.9" r="3.1"/><circle cx="1030.1" cy="365.1" r="3.1"/><circle cx="1035.9" cy="362.0" r="3.1"/><circle cx="982.5" cy="367.1" r="3.1"/><circle cx="989.1" cy="368.7" r="3.1"/><circle cx="999.5" cy="368.5" r="3.1"/><circle cx="1005.6" cy="369.0" r="3.1"/><circle cx="1012.3" cy="366.7" r="3.1"/><circle cx="1014.7" cy="372.3" r="3.1"/><circle cx="1024.1" cy="369.8" r="3.1"/><circle cx="1023.0" cy="375.0" r="3.1"/><circle cx="1034.3" cy="378.1" r="3.1"/><circle cx="1039.8" cy="378.1" r="3.1"/><circle cx="1003.7" cy="381.3" r="3.1"/><circle cx="1000.1" cy="389.1" r="3.1"/><circle cx="1009.4" cy="391.6" r="3.1"/><circle cx="980.2" cy="392.3" r="3.1"/><circle cx="1031.6" cy="388.2" r="3.1"/><circle cx="1041.2" cy="388.6" r="3.1"/><circle cx="1032.3" cy="396.2" r="3.1"/><circle cx="1028.8" cy="420.5" r="3.1"/><circle cx="1030.4" cy="430.6" r="3.1"/><circle cx="1023.8" cy="448.8" r="3.1"/><circle cx="984.1" cy="449.6" r="3.1"/><circle cx="961.6" cy="446.7" r="3.1"/><circle cx="959.0" cy="455.8" r="3.1"/><circle cx="957.4" cy="459.8" r="3.1"/><circle cx="950.3" cy="432.8" r="3.1"/><circle cx="962.9" cy="409.8" r="3.1"/><circle cx="966.0" cy="416.9" r="3.1"/><circle cx="826.3" cy="432.8" r="3.1"/><circle cx="827.9" cy="447.7" r="3.1"/><circle cx="828.7" cy="454.3" r="3.1"/><circle cx="813.8" cy="454.1" r="3.1"/><circle cx="853.5" cy="455.0" r="3.1"/><circle cx="855.8" cy="445.2" r="3.1"/><circle cx="862.7" cy="444.8" r="3.1"/><circle cx="871.5" cy="448.0" r="3.1"/><circle cx="891.0" cy="445.9" r="3.1"/><circle cx="922.5" cy="447.7" r="3.1"/><circle cx="933.1" cy="450.7" r="3.1"/><circle cx="933.1" cy="460.1" r="3.1"/><circle cx="989.6" cy="462.4" r="3.1"/><circle cx="1001.4" cy="462.1" r="3.1"/><circle cx="910.3" cy="463.7" r="3.1"/><circle cx="791.0" cy="463.7" r="3.1"/><circle cx="860.8" cy="466.8" r="3.1"/><circle cx="937.0" cy="464.8" r="3.1"/><circle cx="999.5" cy="468.2" r="3.1"/><circle cx="839.7" cy="476.9" r="3.1"/><circle cx="858.5" cy="476.2" r="3.1"/><circle cx="875.4" cy="474.2" r="3.1"/><circle cx="911.9" cy="476.2" r="3.1"/><circle cx="940.9" cy="471.1" r="3.1"/><circle cx="943.3" cy="473.9" r="3.1"/><circle cx="947.2" cy="472.6" r="3.1"/><circle cx="950.3" cy="472.6" r="3.1"/><circle cx="953.5" cy="476.6" r="3.1"/><circle cx="959.7" cy="475.3" r="3.1"/><circle cx="922.9" cy="479.4" r="3.1"/><circle cx="930.2" cy="478.1" r="3.1"/><circle cx="939.7" cy="479.7" r="3.1"/><circle cx="926.8" cy="484.4" r="3.1"/><circle cx="911.1" cy="486.0" r="3.1"/><circle cx="980.2" cy="484.1" r="3.1"/><circle cx="1013.1" cy="488.8" r="3.1"/><circle cx="1042.2" cy="482.8" r="3.1"/><circle cx="803.5" cy="486.0" r="3.1"/><circle cx="807.9" cy="482.5" r="3.1"/><circle cx="813.0" cy="481.6" r="3.1"/><circle cx="811.4" cy="485.2" r="3.1"/><circle cx="819.2" cy="486.3" r="3.1"/><circle cx="826.6" cy="488.3" r="3.1"/><circle cx="833.1" cy="486.8" r="3.1"/><circle cx="840.4" cy="491.5" r="3.1"/><circle cx="847.2" cy="487.5" r="3.1"/><circle cx="873.4" cy="488.3" r="3.1"/><circle cx="888.6" cy="492.3" r="3.1"/><circle cx="922.1" cy="491.9" r="3.1"/><circle cx="965.2" cy="492.6" r="3.1"/><circle cx="969.2" cy="498.2" r="3.1"/><circle cx="963.4" cy="500.6" r="3.1"/><circle cx="817.2" cy="497.0" r="3.1"/><circle cx="830.7" cy="496.5" r="3.1"/><circle cx="834.9" cy="497.0" r="3.1"/><circle cx="839.3" cy="496.7" r="3.1"/><circle cx="807.8" cy="500.4" r="3.1"/><circle cx="788.3" cy="501.4" r="3.1"/><circle cx="812.5" cy="503.7" r="3.1"/><circle cx="831.5" cy="503.7" r="3.1"/><circle cx="844.1" cy="502.1" r="3.1"/><circle cx="849.5" cy="501.2" r="3.1"/><circle cx="854.6" cy="502.8" r="3.1"/><circle cx="860.1" cy="500.9" r="3.1"/><circle cx="864.3" cy="502.8" r="3.1"/><circle cx="880.5" cy="496.5" r="3.1"/><circle cx="884.9" cy="504.3" r="3.1"/><circle cx="880.5" cy="508.4" r="3.1"/><circle cx="902.1" cy="506.4" r="3.1"/><circle cx="921.0" cy="503.7" r="3.1"/><circle cx="946.4" cy="503.2" r="3.1"/><circle cx="959.7" cy="508.3" r="3.1"/><circle cx="962.9" cy="510.6" r="3.1"/><circle cx="797.7" cy="510.6" r="3.1"/><circle cx="806.7" cy="510.6" r="3.1"/><circle cx="843.6" cy="510.3" r="3.1"/><circle cx="859.3" cy="510.6" r="3.1"/><circle cx="926.0" cy="514.2" r="3.1"/><circle cx="947.7" cy="514.2" r="3.1"/><circle cx="953.5" cy="514.2" r="3.1"/><circle cx="956.6" cy="517.4" r="3.1"/><circle cx="995.5" cy="514.5" r="3.1"/><circle cx="994.8" cy="522.6" r="3.1"/><circle cx="986.4" cy="523.2" r="3.1"/><circle cx="984.4" cy="530.4" r="3.1"/><circle cx="973.1" cy="527.3" r="3.1"/><circle cx="792.2" cy="519.7" r="3.1"/><circle cx="827.9" cy="518.5" r="3.1"/><circle cx="872.6" cy="519.7" r="3.1"/><circle cx="902.4" cy="526.3" r="3.1"/><circle cx="907.6" cy="525.2" r="3.1"/><circle cx="885.5" cy="529.5" r="3.1"/><circle cx="932.3" cy="529.9" r="3.1"/><circle cx="952.4" cy="535.4" r="3.1"/><circle cx="961.6" cy="540.5" r="3.1"/><circle cx="970.7" cy="536.7" r="3.1"/><circle cx="967.6" cy="537.8" r="3.1"/><circle cx="790.7" cy="536.5" r="3.1"/><circle cx="850.6" cy="539.4" r="3.1"/><circle cx="880.5" cy="535.7" r="3.1"/><circle cx="880.0" cy="540.5" r="3.1"/><circle cx="876.1" cy="544.8" r="3.1"/><circle cx="870.6" cy="547.2" r="3.1"/><circle cx="871.8" cy="553.0" r="3.1"/><circle cx="882.8" cy="546.4" r="3.1"/><circle cx="889.4" cy="545.2" r="3.1"/><circle cx="902.8" cy="544.4" r="3.1"/><circle cx="911.6" cy="544.4" r="3.1"/><circle cx="901.7" cy="549.2" r="3.1"/><circle cx="894.6" cy="551.9" r="3.1"/><circle cx="891.5" cy="551.1" r="3.1"/><circle cx="887.5" cy="549.6" r="3.1"/><circle cx="883.6" cy="553.5" r="3.1"/><circle cx="888.3" cy="556.6" r="3.1"/><circle cx="893.0" cy="557.9" r="3.1"/><circle cx="883.6" cy="558.7" r="3.1"/><circle cx="889.9" cy="564.5" r="3.1"/><circle cx="896.5" cy="563.2" r="3.1"/><circle cx="884.4" cy="566.8" r="3.1"/><circle cx="909.5" cy="559.3" r="3.1"/><circle cx="921.3" cy="550.7" r="3.1"/><circle cx="820.5" cy="545.6" r="3.1"/><circle cx="813.0" cy="549.2" r="3.1"/><circle cx="804.6" cy="552.2" r="3.1"/><circle cx="796.5" cy="554.0" r="3.1"/><circle cx="790.2" cy="552.2" r="3.1"/><circle cx="780.0" cy="551.1" r="3.1"/><circle cx="822.4" cy="582.5" r="3.1"/><circle cx="817.7" cy="590.4" r="3.1"/><circle cx="788.6" cy="595.4" r="3.1"/><circle cx="825.5" cy="598.7" r="3.1"/><circle cx="838.1" cy="602.1" r="3.1"/><circle cx="723.6" cy="438.7" r="3.1"/><circle cx="753.5" cy="443.9" r="3.1"/><circle cx="740.1" cy="448.8" r="3.1"/><circle cx="740.1" cy="462.0" r="3.1"/><circle cx="755.0" cy="459.6" r="3.1"/><circle cx="775.4" cy="456.5" r="3.1"/><circle cx="664.3" cy="456.6" r="3.1"/><circle cx="777.8" cy="468.5" r="3.1"/><circle cx="715.8" cy="472.2" r="3.1"/><circle cx="731.2" cy="471.8" r="3.1"/><circle cx="730.4" cy="481.3" r="3.1"/><circle cx="746.9" cy="489.4" r="3.1"/><circle cx="701.2" cy="491.3" r="3.1"/><circle cx="732.3" cy="496.2" r="3.1"/><circle cx="686.4" cy="499.0" r="3.1"/><circle cx="668.2" cy="503.1" r="3.1"/><circle cx="689.4" cy="510.8" r="3.1"/><circle cx="696.5" cy="510.0" r="3.1"/><circle cx="674.2" cy="518.8" r="3.1"/><circle cx="697.3" cy="524.9" r="3.1"/><circle cx="705.1" cy="524.8" r="3.1"/><circle cx="720.2" cy="523.3" r="3.1"/><circle cx="725.5" cy="520.4" r="3.1"/><circle cx="749.2" cy="518.5" r="3.1"/><circle cx="762.1" cy="522.4" r="3.1"/><circle cx="728.4" cy="527.9" r="3.1"/><circle cx="729.1" cy="530.7" r="3.1"/><circle cx="721.0" cy="533.5" r="3.1"/><circle cx="754.3" cy="528.8" r="3.1"/><circle cx="749.2" cy="535.0" r="3.1"/><circle cx="767.9" cy="540.3" r="3.1"/><circle cx="737.0" cy="543.0" r="3.1"/><circle cx="717.4" cy="545.5" r="3.1"/><circle cx="734.9" cy="549.9" r="3.1"/><circle cx="709.5" cy="558.2" r="3.1"/><circle cx="717.0" cy="556.5" r="3.1"/><circle cx="716.6" cy="561.6" r="3.1"/><circle cx="749.5" cy="557.2" r="3.1"/><circle cx="731.5" cy="562.4" r="3.1"/><circle cx="754.9" cy="579.1" r="3.1"/><circle cx="752.8" cy="582.0" r="3.1"/><circle cx="732.6" cy="589.2" r="3.1"/><circle cx="735.9" cy="593.4" r="3.1"/><circle cx="732.0" cy="596.0" r="3.1"/><circle cx="727.4" cy="597.8" r="3.1"/><circle cx="737.1" cy="598.4" r="3.1"/><circle cx="755.1" cy="610.9" r="3.1"/><circle cx="759.0" cy="615.4" r="3.1"/><circle cx="760.7" cy="620.3" r="3.1"/><circle cx="746.0" cy="623.2" r="3.1"/><circle cx="749.4" cy="625.6" r="3.1"/><circle cx="748.2" cy="629.5" r="3.1"/><circle cx="757.1" cy="630.4" r="3.1"/><circle cx="767.3" cy="632.1" r="3.1"/><circle cx="764.9" cy="636.0" r="3.1"/><circle cx="771.5" cy="638.3" r="3.1"/><circle cx="778.4" cy="638.0" r="3.1"/><circle cx="814.0" cy="613.8" r="3.1"/><circle cx="832.7" cy="616.7" r="3.1"/><circle cx="841.2" cy="615.4" r="3.1"/><circle cx="838.8" cy="618.6" r="3.1"/><circle cx="844.7" cy="620.3" r="3.1"/><circle cx="845.8" cy="625.2" r="3.1"/><circle cx="837.9" cy="630.2" r="3.1"/><circle cx="845.0" cy="632.1" r="3.1"/><circle cx="848.0" cy="633.0" r="3.1"/><circle cx="823.2" cy="640.0" r="3.1"/><circle cx="847.1" cy="645.5" r="3.1"/><circle cx="850.2" cy="645.9" r="3.1"/><circle cx="847.1" cy="656.8" r="3.1"/><circle cx="773.2" cy="647.7" r="3.1"/><circle cx="760.1" cy="654.6" r="3.1"/><circle cx="732.0" cy="649.6" r="3.1"/><circle cx="739.8" cy="663.3" r="3.1"/>
</g>
</svg><svg class="abs" style="left:714px;top:219px" width="26" height="38" viewBox="0 0 26 38"><path d="M13 1.6 C6.6 1.6 2.6 6 2.6 11.6 C2.6 18 9 24 13 35.4 C17 24 23.4 18 23.4 11.6 C23.4 6 19.4 1.6 13 1.6 Z" fill="#2a81cb" stroke="#3274a3" stroke-width="1"/><circle cx="13" cy="11.6" r="3.4" fill="#fff"/></svg>
<div class="abs" style="left:2px;top:4px;width:301px;height:128px;background:#fff;box-shadow:0 1px 5px rgba(0,0,0,.35)"></div>
<svg class="abs" style="left:9px;top:13px" width="12" height="8" viewBox="0 0 12 8"><path d="M1 1.2 L6 6.2 L11 1.2" fill="none" stroke="#111" stroke-width="1.8"/></svg>
<div class="t" id="lg0" style="left:24px;top:11.5px;font-size:11.5px;color:#333;letter-spacing:.25px">Legenda</div>
<div class="abs" style="left:10px;top:31px;width:285px;height:1px;background:#e5e5e5"></div>
<div class="abs" style="left:12.5px;top:35px;width:11px;height:11px;background:#1a73e8;border-radius:2px"></div>
<svg class="abs" style="left:12.5px;top:35px" width="11" height="11" viewBox="0 0 11 11"><path d="M2.4 5.6 L4.6 7.8 L8.8 3" fill="none" stroke="#fff" stroke-width="1.6"/></svg>
<div class="t" id="lg1" style="left:27.5px;top:35px;font-size:11px;color:#333;letter-spacing:.36px">Casos de Zika Vírus por Município (ponto) – 2025</div>
<svg class="abs" style="left:10px;top:53px" width="120" height="68" viewBox="0 0 120 68" font-family="DejaVu Sans, sans-serif" font-size="11" fill="#111">
<circle cx="12.4" cy="7.8" r="1.4" fill="#ffeb3b" stroke="#b39b2a" stroke-width=".6"/>
<circle cx="12.4" cy="20.4" r="2.6" fill="#ffa726" stroke="#c98a1a" stroke-width=".5"/>
<circle cx="12.4" cy="33.2" r="3.4" fill="#ff6d1f" stroke="#c95a1a" stroke-width=".5"/>
<circle cx="12.4" cy="45.8" r="4.4" fill="#ff2a1a" stroke="#c92a1a" stroke-width=".5"/>
<circle cx="12.4" cy="58.3" r="5.4" fill="#b30000" stroke="#8a0000" stroke-width=".5"/>
<text x="20.2" y="11.8">1 - &lt; 37</text>
<text x="20.2" y="24.4">37 - &lt; 142</text>
<text x="20.2" y="37.2">142 - &lt; 335</text>
<text x="20.2" y="49.8">335 - &lt; 555</text>
<text x="20.2" y="62.3">555 - &lt; 838</text>
</svg>
<div class="abs" style="left:10px;top:122.4px;width:285px;height:1px;background:#1170b8"></div>
<div class="abs" style="left:290.8px;top:118.6px;width:8.8px;height:8.8px;border-radius:50%;background:#1170b8"></div>
<div class="abs" style="left:921px;top:4px;width:450px;height:35.5px;background:#fff;box-shadow:0 1px 4px rgba(0,0,0,.4)"></div>
<div class="t" id="ms" style="left:929px;top:14.5px;font-size:13px;color:#a9a9a9;letter-spacing:.49px">Buscar por nome de localização</div>
<svg class="abs" style="left:1320px;top:13px" width="16" height="16" viewBox="0 0 16 16"><circle cx="6.2" cy="6.2" r="4.2" fill="none" stroke="#111" stroke-width="1.6"/><line x1="9.4" y1="9.4" x2="14.2" y2="14.2" stroke="#111" stroke-width="2"/></svg>
<svg class="abs" style="left:1347px;top:15px" width="14" height="11" viewBox="0 0 14 11"><path d="M0 1 H14 M0 5.5 H14 M0 10 H14" stroke="#111" stroke-width="1.5"/></svg>
<div class="abs" style="left:1339px;top:560.5px;width:36px;height:105px;background:#1170b8;box-shadow:0 1px 4px rgba(0,0,0,.5)"></div>
<div class="abs" style="left:1339px;top:595.5px;width:36px;height:1px;background:#2d82c4"></div>
<div class="abs" style="left:1339px;top:630px;width:36px;height:1px;background:#2d82c4"></div>
<svg class="abs" style="left:1339px;top:560.5px" width="36" height="105" viewBox="0 0 36 105"><g fill="#fff"><rect x="7.5" y="15.4" width="21" height="3.2"/><rect x="16.4" y="6.5" width="3.2" height="21"/><rect x="7.5" y="50.4" width="21" height="3.2"/><circle cx="11" cy="87" r="2.4"/><circle cx="18" cy="87" r="2.4"/><circle cx="25" cy="87" r="2.4"/></g></svg>
<div class="abs" style="left:2px;top:596px;width:70px;height:70px;background:#fff;box-shadow:0 3px 5px rgba(0,0,0,.5)"></div>
<svg class="abs" style="left:4.4px;top:599.2px" width="65" height="64" viewBox="0 0 65 64"><defs><filter id="tb"><feGaussianBlur stdDeviation="1.4"/></filter><filter id="tn" x="0" y="0" width="100%" height="100%"><feTurbulence type="fractalNoise" baseFrequency=".32" numOctaves="2" seed="4"/><feColorMatrix type="matrix" values="0 0 0 0 .55  0 0 0 0 .62  0 0 0 0 .68  1.6 0 0 0 -.62"/></filter><clipPath id="tc"><rect width="65" height="64"/></clipPath></defs><g clip-path="url(#tc)"><rect width="65" height="64" fill="#e6e2da"/><g filter="url(#tb)"><path d="M44 6 L47 8 L41 30 L35 48 L33 64 L28 64 L30 46 L35 28 Z" fill="#c3d3da"/><path d="M28 50 L36 48 L42 60 L50 62 L60 52 L65 46 L65 64 L24 64 Z" fill="#c0d5dd"/><path d="M0 30 L10 28 L22 40 L28 50 L22 52 L10 40 L0 38 Z" fill="#d2dadb"/><path d="M42 12 L47 13 L42 30 L38 29 Z" fill="#efd3b4"/><path d="M0 50 L14 52 L20 64 L0 64 Z" fill="#d6e2c8"/><path d="M20 4 L34 6 L30 14 L20 12 Z" fill="#d5e2cb"/><path d="M50 0 L65 0 L65 14 L56 10 Z" fill="#dbe0d0"/><path d="M0 0 L18 0 L16 22 L0 24 Z" fill="#e2dcdb"/><path d="M40 36 L62 32 L65 44 L52 56 L42 52 Z" fill="#ece5d8"/><path d="M4 8 L30 20 M10 44 L40 22 M46 40 L64 24 M8 26 L24 30" stroke="#d8cfd6" stroke-width="1.2" fill="none"/></g><rect width="65" height="64" filter="url(#tn)" opacity=".55"/></g></svg>
</div>
<!-- right panel -->
<div id="panel"></div>
<div id="rtools"></div>
<svg class="abs" style="left:1389px;top:230px" width="16" height="22" viewBox="0 0 16 22"><path d="M8 0.4 C3.8 0.4 0.8 3.4 0.8 7.4 C0.8 11.6 5 15.6 8 21.4 C11 15.6 15.2 11.6 15.2 7.4 C15.2 3.4 12.2 0.4 8 0.4 Z M8 4.2 A3 3 0 1 1 8 10.2 A3 3 0 1 1 8 4.2 Z" fill="#000" fill-rule="evenodd"/></svg>
<svg class="abs" style="left:1845px;top:230px" width="22" height="22" viewBox="0 0 22 22"><path d="M1.4 1.6 L20.6 20.6 M20.6 1.6 L1.4 20.6" stroke="#000" stroke-width="2" fill="none"/></svg>
<svg class="abs" style="left:1385px;top:274px" width="15" height="14" viewBox="0 0 15 14"><path d="M7.5 0.8 L14.2 5 L7.5 9.2 L0.8 5 Z" fill="#000"/><path d="M1.2 7.6 L7.5 11.4 L13.8 7.6 L13.8 9 L7.5 13 L1.2 9 Z" fill="#000"/></svg>
<div class="abs" style="left:1402px;top:265px;width:434px;height:28px;border:1px solid #ccc;background:#fff"></div>
<div class="t" id="sel" style="left:1412px;top:272px;font-size:13px;color:#333;letter-spacing:.33px">Casos de Zika Vírus por Município (ponto) – 2025</div>
<div class="abs" style="left:1817px;top:277px;border-left:4px solid transparent;border-right:4px solid transparent;border-top:4.5px solid #111"></div>
<div class="abs" style="left:1839px;top:265px;width:27px;height:27px;background:#1170b8;border-radius:2px"></div>
<svg class="abs" style="left:1845px;top:270px" width="16" height="16" viewBox="0 0 16 16"><g fill="#fff"><path d="M1.2 4.2 L4.6 3 V13 L1.2 14.2 Z"/><path d="M5.4 3 L8.8 4.2 V14.2 L5.4 13 Z"/><path d="M9.6 4.2 L13 3 V13 L9.6 14.2 Z" opacity=".8"/><path d="M9.4 0.4 H14.6 L12.6 3 V6 L11.4 5.2 V3 Z"/></g></svg>
<div class="abs" style="left:1380px;top:300px;width:493px;height:1px;background:#ddd"></div>
<svg class="abs" style="left:1388px;top:316px" width="10" height="13" viewBox="0 0 16 22"><path d="M8 0.4 C3.8 0.4 0.8 3.4 0.8 7.4 C0.8 11.6 5 15.6 8 21.4 C11 15.6 15.2 11.6 15.2 7.4 C15.2 3.4 12.2 0.4 8 0.4 Z M8 4.2 A3 3 0 1 1 8 10.2 A3 3 0 1 1 8 4.2 Z" fill="#000" fill-rule="evenodd"/></svg>
<div class="t" id="latlon" style="left:1409.5px;top:316px;font-family:'DejaVu Sans Mono','Liberation Mono',monospace;font-size:11.5px;color:#222">Lat: -9,648 - Long: -54,532</div>
<div class="abs" style="left:1813px;top:308px;width:53px;height:27px;background:#1170b8;border-radius:2px"></div>
<svg class="abs" style="left:1820px;top:313px" width="14" height="14" viewBox="0 0 14 14"><circle cx="7" cy="7" r="6.6" fill="#fff"/><text x="7" y="11" text-anchor="middle" font-family="Liberation Serif, serif" font-style="italic" font-weight="bold" font-size="11" fill="#1170b8">i</text></svg>
<svg class="abs" style="left:1846px;top:313px" width="15" height="15" viewBox="0 0 15 15"><g fill="none" stroke="#fff" stroke-width="1.2"><circle cx="7" cy="7" r="5.8"/><ellipse cx="7" cy="7" rx="2.6" ry="5.8"/><line x1="1.2" y1="7" x2="12.8" y2="7"/><circle cx="9" cy="9" r="2.6" fill="#1170b8"/><line x1="11" y1="11" x2="14" y2="14" stroke-width="1.6"/></g></svg>
<div class="abs" style="left:1380px;top:342px;width:493px;height:1px;background:#ddd"></div>
<div class="t" id="k1" style="left:1398.3px;top:378px;font-size:13px;font-weight:bold;color:#111;letter-spacing:.16px">Código IBGE:</div>
<div class="t" id="k2" style="left:1398.3px;top:397px;font-size:13px;font-weight:bold;color:#111;letter-spacing:.37px">Município:</div>
<div class="t" id="k3" style="left:1398.3px;top:416px;font-size:13px;font-weight:bold;color:#111;letter-spacing:-.19px">Casos:</div>
<div class="t" id="v1" style="left:1639.5px;top:378px;font-size:13px;color:#333;letter-spacing:-.38px">510410</div>
<div class="t" id="v2" style="left:1639.5px;top:397px;font-size:13px;color:#333;letter-spacing:.56px">Guarantã do Norte</div>
<div class="t" id="v3" style="left:1639.5px;top:416px;font-size:13px;color:#333;letter-spacing:-.73px">541</div>
<!-- right tools -->
<svg class="abs" style="left:1881px;top:228px" width="23" height="24" viewBox="0 0 23 24"><g fill="#000"><path d="M5 1 H18 V6.6 H16.4 V2.6 H6.6 V6.6 H5 Z"/><path d="M2.6 7.4 H20.4 C21.8 7.4 22.6 8.2 22.6 9.6 V17.6 H18.6 V13.2 H4.4 V17.6 H0.4 V9.6 C0.4 8.2 1.2 7.4 2.6 7.4 Z"/><path d="M5.6 14.4 H17.4 V23 H5.6 Z M7.2 16 V21.4 H15.8 V16 Z" fill-rule="evenodd"/><rect x="8.6" y="17" width="5.8" height="1.3"/><rect x="8.6" y="19.3" width="5.8" height="1.3"/></g><circle cx="19.2" cy="10.2" r="1" fill="#fff"/></svg>
<svg class="abs" style="left:1882px;top:266px" width="22" height="22" viewBox="0 0 22 22"><g transform="rotate(-45 11 11)"><rect x="-2" y="7.4" width="26" height="7.2" fill="#000"/><g stroke="#fff" stroke-width="1"><line x1="1" y1="7.4" x2="1" y2="10.4"/><line x1="4" y1="7.4" x2="4" y2="11.4"/><line x1="7" y1="7.4" x2="7" y2="10.4"/><line x1="10" y1="7.4" x2="10" y2="11.4"/><line x1="13" y1="7.4" x2="13" y2="10.4"/><line x1="16" y1="7.4" x2="16" y2="11.4"/><line x1="19" y1="7.4" x2="19" y2="10.4"/><line x1="22" y1="7.4" x2="22" y2="11.4"/></g></g></svg>
<!-- bottom bar -->
<div id="bbar"></div>
<div class="t" id="attr" style="left:5px;top:898px;font-size:10px;color:#666;letter-spacing:.6px">© OpenStreetMap contributors.</div>
<div class="abs" style="left:1748px;top:895px;width:22px;height:22px;background:#1170b8;border-radius:2px"></div>
<svg class="abs" style="left:1754px;top:899px" width="10" height="14" viewBox="0 0 10 14"><path d="M1 5.4 H9 V9.6 C9 12 7.4 13.4 5 13.4 C2.6 13.4 1 12 1 9.6 Z" fill="#fff"/><path d="M1 4.6 C1 2.2 2.4 0.8 4.5 0.7 V4.6 Z M5.5 0.7 C7.6 0.8 9 2.2 9 4.6 H5.5 Z" fill="#fff"/></svg>
<div class="t" id="esc" style="left:1775.5px;top:901px;font-size:11.5px;color:#333;letter-spacing:-.19px">Escala:</div>
<div class="abs" style="left:1816px;top:895px;width:94px;height:22px;border:1px solid #111;border-radius:3px;background:#efefef"></div>
<div class="t" id="scv" style="left:1824.3px;top:901px;font-size:11.5px;color:#222;letter-spacing:-.55px">1 : 18489335</div>
<svg class="abs" style="left:1896px;top:902px" width="11" height="8" viewBox="0 0 11 8"><path d="M1.2 1.6 L5.5 5.8 L9.8 1.6" fill="none" stroke="#000" stroke-width="2"/></svg>
<!-- footer -->
<div id="foot"></div>
<div class="t" id="ft" style="left:6px;top:928.5px;font-size:13.5px;color:#fff;letter-spacing:.32px">Distribuído por <b>Geonode</b></div>
</div>
</body>
</html>
